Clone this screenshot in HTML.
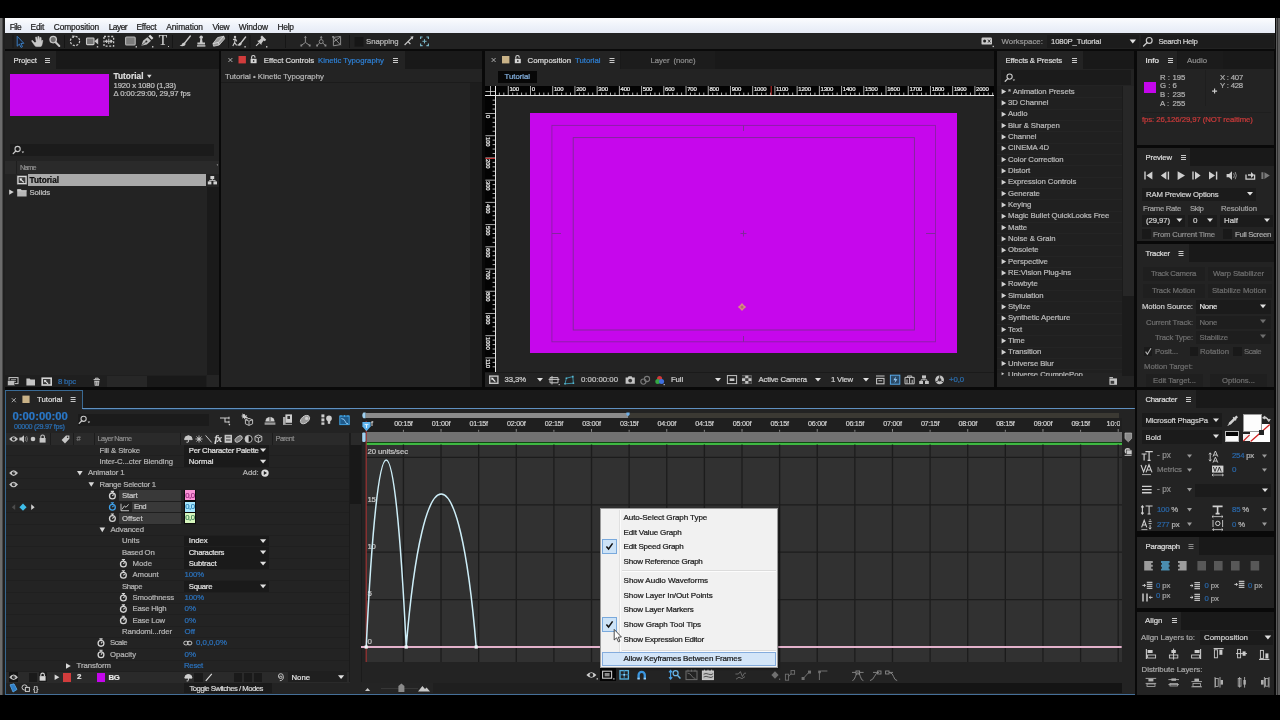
<!DOCTYPE html><html><head><meta charset="utf-8"><title>After Effects - Tutorial</title><style>
*{margin:0;padding:0;box-sizing:border-box}
html,body{width:1280px;height:720px;overflow:hidden;background:#000}
body{font-family:"Liberation Sans",sans-serif;font-size:10px;position:relative}
#app{position:absolute;left:0;top:0;width:1280px;height:720px;overflow:hidden;will-change:transform}
#app div,#app svg,#app span.a{position:absolute}
.t{white-space:nowrap;line-height:12px;height:12px;-webkit-text-stroke:0.22px currentColor}
.b{font-weight:bold}
</style></head><body><div id="app">
<div style="left:0px;top:18px;width:1280px;height:677px;background:#090909;"></div>
<div style="left:0px;top:18px;width:2px;height:677px;background:#6c6c6c;"></div>
<div style="left:2px;top:18px;width:1.4px;height:677px;background:#474747;"></div>
<div style="left:3.4px;top:18px;width:1.2px;height:677px;background:#1f1f1f;"></div>
<div style="left:1275.5px;top:18px;width:4.5px;height:677px;background:#5a5a5a;"></div>
<div style="left:1277px;top:18px;width:1px;height:677px;background:#303030;"></div>
<div style="left:4.6px;top:18.3px;width:1270.9px;height:14.4px;background:linear-gradient(#fbfcfe,#eef2fa 55%,#e6ebf5);"></div>
<div style="left:4.6px;top:33px;width:1270px;height:16.4px;background:#222222;"></div>
<div style="left:4.6px;top:49.4px;width:1270px;height:1.6px;background:#0a0a0a;"></div>
<div style="left:5px;top:51px;width:214px;height:336.3px;background:#232323;"></div>
<div style="left:5px;top:51px;width:214px;height:18px;background:#191919;"></div>
<div style="left:5px;top:51px;width:51px;height:19px;background:#232323;"></div>
<div style="left:221px;top:51px;width:261px;height:336.3px;background:#232323;"></div>
<div style="left:221px;top:51px;width:261px;height:18px;background:#191919;"></div>
<div style="left:221px;top:51px;width:184px;height:19px;background:#232323;"></div>
<div style="left:485px;top:51px;width:509px;height:336.3px;background:#232323;"></div>
<div style="left:485px;top:51px;width:509px;height:18px;background:#191919;"></div>
<div style="left:485px;top:51px;width:135px;height:19px;background:#232323;"></div>
<div style="left:997px;top:51px;width:137px;height:336.3px;background:#232323;"></div>
<div style="left:997px;top:51px;width:137px;height:18px;background:#191919;"></div>
<div style="left:997px;top:51px;width:86px;height:19px;background:#232323;"></div>
<div style="left:1137px;top:51px;width:137px;height:94px;background:#232323;"></div>
<div style="left:1137px;top:51px;width:137px;height:18px;background:#191919;"></div>
<div style="left:1137px;top:51px;width:40px;height:19px;background:#232323;"></div>
<div style="left:1137px;top:148px;width:137px;height:93px;background:#232323;"></div>
<div style="left:1137px;top:148px;width:137px;height:18px;background:#191919;"></div>
<div style="left:1137px;top:148px;width:53px;height:19px;background:#232323;"></div>
<div style="left:1137px;top:244px;width:137px;height:143px;background:#232323;"></div>
<div style="left:1137px;top:244px;width:137px;height:18px;background:#191919;"></div>
<div style="left:1137px;top:244px;width:52px;height:19px;background:#232323;"></div>
<div style="left:1137px;top:390px;width:137px;height:141px;background:#232323;"></div>
<div style="left:1137px;top:390px;width:137px;height:18px;background:#191919;"></div>
<div style="left:1137px;top:390px;width:59px;height:19px;background:#232323;"></div>
<div style="left:1137px;top:537px;width:137px;height:71px;background:#232323;"></div>
<div style="left:1137px;top:537px;width:137px;height:18px;background:#191919;"></div>
<div style="left:1137px;top:537px;width:62px;height:19px;background:#232323;"></div>
<div style="left:1137px;top:612px;width:137px;height:83px;background:#232323;"></div>
<div style="left:1137px;top:612px;width:137px;height:18px;background:#191919;"></div>
<div style="left:1137px;top:612px;width:44px;height:19px;background:#232323;"></div>
<div style="left:5px;top:390.2px;width:1129.8px;height:304.8px;background:#232323;"></div>
<div style="left:83px;top:390.2px;width:1051.8px;height:18.3px;background:#191919;"></div>
<div style="left:1047px;top:35px;width:92px;height:13px;background:#1c1c1c;"></div>
<div style="left:1141px;top:35px;width:133px;height:13px;background:#1c1c1c;"></div>
<div class="t" style="left:9.75px;top:20.69px;color:#1c1c1c;font-size:8.4px;letter-spacing:-0.509px;">File</div>
<div class="t" style="left:30.60px;top:20.69px;color:#1c1c1c;font-size:8.4px;letter-spacing:-0.269px;">Edit</div>
<div class="t" style="left:53.75px;top:20.69px;color:#1c1c1c;font-size:8.4px;letter-spacing:-0.122px;">Composition</div>
<div class="t" style="left:108.75px;top:20.69px;color:#1c1c1c;font-size:8.4px;letter-spacing:-0.533px;">Layer</div>
<div class="t" style="left:136.50px;top:20.69px;color:#1c1c1c;font-size:8.4px;letter-spacing:-0.221px;">Effect</div>
<div class="t" style="left:166.25px;top:20.69px;color:#1c1c1c;font-size:8.4px;letter-spacing:-0.067px;">Animation</div>
<div class="t" style="left:212.50px;top:20.69px;color:#1c1c1c;font-size:8.4px;letter-spacing:-0.327px;">View</div>
<div class="t" style="left:238.75px;top:20.69px;color:#1c1c1c;font-size:8.4px;letter-spacing:-0.104px;">Window</div>
<div class="t" style="left:277.50px;top:20.69px;color:#1c1c1c;font-size:8.4px;letter-spacing:-0.257px;">Help</div>
<div class="t" style="left:366.00px;top:35.81px;color:#b9b9b9;font-size:7.76px;letter-spacing:-0.037px;">Snapping</div>
<div class="t" style="left:1001.50px;top:35.77px;color:#9a9a9a;font-size:7.89px;">Workspace:</div>
<div class="t" style="left:1051.00px;top:35.81px;color:#d0d0d0;font-size:7.76px;letter-spacing:-0.167px;">1080P_Tutorial</div>
<div class="t" style="left:1158.50px;top:35.81px;color:#d0d0d0;font-size:7.76px;letter-spacing:-0.337px;">Search Help</div>
<svg style="left:0;top:0" width="1280" height="720" viewBox="0 0 1280 720" fill="none"><path d="M13,35V48" stroke="#161616" stroke-width="1"/><path d="M64.5,35V48" stroke="#161616" stroke-width="1"/><path d="M172.5,35V48" stroke="#161616" stroke-width="1"/><path d="M228.5,35V48" stroke="#161616" stroke-width="1"/><path d="M250,35V48" stroke="#161616" stroke-width="1"/><path d="M285.5,35V48" stroke="#161616" stroke-width="1"/><path d="M349.5,35V48" stroke="#161616" stroke-width="1"/><path d="M17.2,36.3V46.2L19.4,44.1L21,47.4L22.5,46.7L20.9,43.5L23.8,43.3Z" fill="#16202c" stroke="#3a7cc0" stroke-width="1" stroke-linejoin="round"/><path d="M33.6,41.5L32.2,40.2L31.6,40.9L34.6,45.3Q35.3,46.6 36.5,46.6H40Q41.6,46.6 41.9,45L42.8,40.6L41.9,40.2L41.2,42.2L41.1,37.6L40.1,37.4L39.7,41L39,36.5L37.9,36.4L37.8,41L36.6,37L35.6,37.2L36.2,41.8L35,43Z" fill="#c9c9c9" stroke="#c9c9c9" stroke-width="0.6" stroke-linejoin="round"/><circle cx="53.2" cy="39.6" r="3.2" stroke="#c9c9c9" stroke-width="1.3" fill="#6d6d6d"/><path d="M55.6,42.2L59.3,46" stroke="#c9c9c9" stroke-width="2" stroke-linecap="round"/><circle cx="75" cy="41" r="4.6" stroke="#c9c9c9" stroke-width="1.2" stroke-dasharray="2.2 1.4"/><path d="M72,35.6l3,0.2l-1.6,2.4z" fill="#c9c9c9"/><rect x="86.5" y="38" width="7.5" height="6.6" rx="0.8" fill="#777" stroke="#c9c9c9" stroke-width="1.1"/><path d="M94.3,41.2L98.2,38V44.6Z" fill="#c9c9c9"/><rect x="96.8" y="46.1" width="1.4" height="1.4" fill="#c9c9c9"/><rect x="104" y="36.5" width="9.6" height="9.6" stroke="#c9c9c9" stroke-width="1.3" stroke-dasharray="2 1.6"/><path d="M105.5,41.3H112M108.8,38.6V44M105.2,41.3l1.6,-1.4v2.8zM112.4,41.3l-1.6,-1.4v2.8z" stroke="#c9c9c9" stroke-width="1" fill="#c9c9c9"/><rect x="125.6" y="37" width="9.6" height="8" rx="1" fill="#7c7c7c" stroke="#b5b5b5" stroke-width="1.1"/><rect x="135.6" y="46.1" width="1.4" height="1.4" fill="#c9c9c9"/><path d="M141.4,45.7L143,40.8L147.4,37.2L151,40.8L146.8,44.6Z" fill="#c2c2c2"/><circle cx="146.4" cy="41.4" r="1" fill="#2a2a2a"/><path d="M141.8,45.3L145.8,42" stroke="#2a2a2a" stroke-width="0.7"/><path d="M148.4,36.2L150.2,34.8L153.4,38L151.8,39.8Z" fill="#dadada"/><rect x="152" y="46.1" width="1.4" height="1.4" fill="#c9c9c9"/><path d="M190.3,36L184.2,43.6" stroke="#c9c9c9" stroke-width="1.5" stroke-linecap="round"/><path d="M184.8,42.6Q186.4,44.6 184.4,45.8Q182,46.8 179.6,45.6Q182.2,45 182.6,43Z" fill="#c9c9c9"/><circle cx="201.2" cy="37.2" r="1.7" fill="#c9c9c9"/><path d="M200.4,38.4H202L202.6,42.4H205V44.4H197.4V42.4H199.8Z" fill="#c9c9c9"/><rect x="197" y="45.2" width="8.4" height="1.4" fill="#c9c9c9"/><path d="M217.6,37.6L223.8,36.2L224.6,38.8L219.2,45L213.6,46.2L213,43.6Z" fill="#9a9a9a" stroke="#c9c9c9" stroke-width="0.9" stroke-linejoin="round"/><path d="M213,43.6L218.4,42.4L219.2,45M218.4,42.4L223.8,36.2" stroke="#e4e4e4" stroke-width="0.8"/><circle cx="235" cy="37" r="1.2" fill="#c9c9c9"/><path d="M233,39.6L235.4,39L236.8,41.4M235.2,39.2L234.6,42.6L232.8,46M234.8,42.8L236.6,45.4" stroke="#c9c9c9" stroke-width="1.1"/><path d="M245.6,37L240.6,43.4" stroke="#c9c9c9" stroke-width="1.4" stroke-linecap="round"/><path d="M241,42.6Q242.6,44.4 240.4,45.4Q238.4,46 236.8,45Q239,44.6 239.2,43Z" fill="#c9c9c9"/><rect x="244.4" y="46.1" width="1.4" height="1.4" fill="#c9c9c9"/><path d="M260.4,37L262,35.6L266.2,39.8L264.8,41.2L263.6,40.6L261.6,43.2L261.4,45L257.2,40.8L259,40.4L261.2,38.2Z" fill="#c9c9c9"/><path d="M259.2,42.8L256,45.8" stroke="#c9c9c9" stroke-width="1.1"/><rect x="266" y="46.1" width="1.4" height="1.4" fill="#c9c9c9"/><path d="M305.4,37V42.4L301.4,45.4M305.4,42.4L309.6,45.4" stroke="#8c8c8c" stroke-width="1"/><path d="M305.4,35.8l1.4,2h-2.8zM300.4,44.6h1.8v1.8h-1.8zM308.8,44.6h1.8v1.8h-1.8z" fill="#8c8c8c"/><circle cx="321.2" cy="41.6" r="2" stroke="#8c8c8c" stroke-width="1"/><path d="M321.2,37V39.4M319.6,43L317.4,45.2M322.8,43L325,45.2" stroke="#8c8c8c" stroke-width="1"/><path d="M321.2,35.8l1.4,2h-2.8zM316.2,44.6h1.8v1.8h-1.8zM324.6,44.6h1.8v1.8h-1.8z" fill="#8c8c8c"/><path d="M333.4,37.4L340.6,36.4V44.6L333.4,45.8ZM333,36.6L340.8,45.2M340.4,37L333.4,42" stroke="#8c8c8c" stroke-width="1"/><rect x="332.2" y="36" width="1.8" height="1.8" fill="#8c8c8c"/><rect x="354.5" y="37" width="9" height="9.6" fill="#161616"/><path d="M404.6,45L408,41.6L410.4,44M408,41.6L412.6,37" stroke="#c9c9c9" stroke-width="1.2"/><path d="M413.4,36.2l-3.2,0.6l2.6,2.6z" fill="#c9c9c9"/><path d="M420.6,39V37H422.6M426.4,37H428.4V39M428.4,43.6V45.6H426.4M422.6,45.6H420.6V43.6" stroke="#79b4c4" stroke-width="1.2"/><path d="M424.5,39.2V43.4M422.4,41.3H426.6" stroke="#79b4c4" stroke-width="1"/><rect x="981.5" y="37.6" width="10.5" height="7" rx="1.2" fill="#c9c9c9"/><circle cx="984.6" cy="41.1" r="1.5" fill="#222"/><path d="M988,39.6L990.4,42.6M990.4,39.6L988,42.6" stroke="#222" stroke-width="0.9"/><rect x="992.6" y="45.8" width="1.3" height="1.3" fill="#c9c9c9"/><path d="M1129.6,39.6H1136L1132.8,43.4Z" fill="#e2e2e2"/><circle cx="1149.2" cy="40.4" r="2.9" stroke="#c9c9c9" stroke-width="1.2"/><path d="M1147.2,42.6L1143.6,46" stroke="#c9c9c9" stroke-width="1.4" stroke-linecap="round"/></svg>
<div class="t" style="left:158.80px;top:34.99px;color:#d4d4d4;font-size:13.6px;font-family:'Liberation Serif',serif;">T</div>
<div style="left:167.6px;top:46.1px;width:1.4px;height:1.4px;background:#c9c9c9"></div>
<div class="t" style="left:13.40px;top:54.91px;color:#dcdcdc;font-size:7.76px;letter-spacing:-0.107px;">Project</div>
<div style="left:10px;top:74px;width:99px;height:42px;background:#c406ec;"></div>
<div class="t" style="left:113.50px;top:71.14px;color:#dedede;font-size:8.24px;letter-spacing:0.050px;font-weight:bold;">Tutorial</div>
<div class="t" style="left:113.50px;top:79.61px;color:#c0c0c0;font-size:7.76px;letter-spacing:-0.147px;">1920 x 1080 (1,33)</div>
<div class="t" style="left:113.50px;top:88.31px;color:#c0c0c0;font-size:7.76px;letter-spacing:-0.123px;">Δ 0:00:29:00, 29,97 fps</div>
<div style="left:10px;top:144px;width:204px;height:12px;background:#1b1b1b;"></div>
<div style="left:5px;top:161px;width:214px;height:12.5px;background:#2a2a2a;"></div>
<div style="left:16px;top:161px;width:1px;height:12.5px;background:#1e1e1e;"></div>
<div class="t" style="left:20.00px;top:161.68px;color:#8f8f8f;font-size:7.27px;letter-spacing:-0.973px;">Name</div>
<div style="left:28px;top:174px;width:178px;height:12.3px;background:#a9a9a9;"></div>
<div class="t" style="left:29.50px;top:174.76px;color:#0d0d0d;font-size:8.21px;font-weight:bold;">Tutorial</div>
<div class="t" style="left:29.50px;top:187.31px;color:#c0c0c0;font-size:7.76px;letter-spacing:-0.106px;">Solids</div>
<div style="left:207px;top:186.5px;width:12px;height:188.5px;background:#1a1a1a;"></div>
<div style="left:5px;top:375px;width:214px;height:12.3px;background:#1f1f1f;"></div>
<div style="left:107px;top:376px;width:40px;height:11px;background:#272727;"></div>
<div style="left:147px;top:376px;width:59px;height:11px;background:#191919;"></div>
<div style="left:207px;top:375px;width:12px;height:12.3px;background:#242424;"></div>
<div class="t" style="left:58.00px;top:376.11px;color:#2b6cae;font-size:7.76px;letter-spacing:-0.197px;">8 bpc</div>
<svg style="left:0;top:0" width="1280" height="720" viewBox="0 0 1280 720" fill="none"><path d="M45,58.5h5M45,60.5h5M45,62.5h5" stroke="#c9c9c9" stroke-width="1"/><path d="M147,74.8h4.6l-2.3,3.2z" fill="#dcdcdc"/><circle cx="17.6" cy="149" r="2.6" stroke="#c9c9c9" stroke-width="1.1"/><path d="M15.8,151L13.2,153.6" stroke="#c9c9c9" stroke-width="1.3" stroke-linecap="round"/><path d="M21.6,151.6h2.6l-1.3,1.6z" fill="#c9c9c9"/><path d="M216.6,164.6h1.6l-0.8,1.2z" fill="#bdbdbd"/><rect x="17" y="175.6" width="10" height="9" fill="#d8d8d8" stroke="#444" stroke-width="0.6"/><rect x="18.6" y="177.2" width="6.8" height="5.8" fill="#3a3a3a"/><path d="M19.6,178.2l2.8,0.4l-0.8,0.8l2.6,2.6l-0.8,0.8l-2.6,-2.6l-0.8,0.8z" fill="#e8e8e8"/><rect x="210.4" y="176" width="3.8" height="3" fill="#d0d0d0"/><rect x="207.8" y="181.4" width="3.6" height="3" fill="#d0d0d0"/><rect x="213.4" y="181.4" width="3.6" height="3" fill="#d0d0d0"/><path d="M212.3,179v1.4M209.6,181.4v-1h5.6v1" stroke="#d0d0d0" stroke-width="0.9"/><path d="M9.2,189.4v5.4l4.6,-2.7z" fill="#d0d0d0"/><path d="M17.2,189h3.6l1,1.2h4.8v6.2h-9.4z" fill="#b8b8b8"/><path d="M17.2,190.8h9.4" stroke="#dadada" stroke-width="0.7"/><rect x="9" y="377.6" width="9" height="6" fill="none" stroke="#c9c9c9" stroke-width="1"/><rect x="7.6" y="380.6" width="7" height="5" fill="#bbb" stroke="#222" stroke-width="0.5"/><path d="M11,379.6h5M11,381.4h5" stroke="#c9c9c9" stroke-width="0.7"/><path d="M26.4,378.4h3.2l0.9,1.1h4.5v6h-8.6z" fill="#c4c4c4"/><rect x="41.4" y="377.4" width="10.6" height="8.4" fill="#d4d4d4"/><rect x="43" y="379" width="7.4" height="5.2" fill="#3a3a3a"/><path d="M44,380l2.6,0.3l-0.7,0.7l2.6,2.4l-0.8,0.8l-2.5,-2.5l-0.8,0.7z" fill="#e8e8e8"/><path d="M93.6,379.6h6.4M95.4,379.4v-1.2h2.8v1.2" stroke="#c4c4c4" stroke-width="1"/><path d="M94.2,380.8h5.2l-0.5,5h-4.2z" fill="#c4c4c4"/><path d="M95.8,381.8v3M97.8,381.8v3" stroke="#333" stroke-width="0.6"/></svg>
<div class="t" style="left:263.75px;top:54.71px;color:#dadada;font-size:7.76px;letter-spacing:-0.017px;">Effect Controls</div>
<div class="t" style="left:318.00px;top:54.70px;color:#2e7fd2;font-size:7.78px;">Kinetic Typography</div>
<div class="t" style="left:225.00px;top:70.70px;color:#b4b4b4;font-size:7.8px;">Tutorial • Kinetic Typography</div>
<div style="left:221px;top:82px;width:261px;height:1px;background:#1b1b1b;"></div>
<div style="left:470px;top:83px;width:12px;height:304.3px;background:#1d1d1d;"></div>
<div style="left:621px;top:51px;width:94px;height:18px;background:#1c1c1c;"></div>
<div class="t" style="left:527.50px;top:54.69px;color:#dadada;font-size:7.83px;">Composition</div>
<div class="t" style="left:575.00px;top:54.71px;color:#2e7fd2;font-size:7.76px;letter-spacing:-0.011px;">Tutorial</div>
<div class="t" style="left:650.50px;top:54.71px;color:#8b8b8b;font-size:7.76px;letter-spacing:-0.089px;white-space:pre;">Layer  (none)</div>
<div style="left:497.5px;top:70.5px;width:39.5px;height:12px;background:#070707;"></div>
<div class="t" style="left:504.50px;top:70.91px;color:#86b4e4;font-size:7.76px;letter-spacing:-0.011px;">Tutorial</div>
<div style="left:485px;top:85.5px;width:509px;height:10.5px;background:#030303;"></div>
<div style="left:485px;top:96px;width:10.8px;height:276px;background:#030303;"></div>
<div style="left:485px;top:95px;width:509px;height:1px;background:#e8e8e8;"></div>
<div style="left:494.8px;top:85.5px;width:1px;height:286.5px;background:#e8e8e8;"></div>
<div class="t" style="left:509.48px;top:83.32px;color:#ececec;font-size:6px;letter-spacing:-0.2px;">100</div>
<div class="t" style="left:531.70px;top:83.32px;color:#ececec;font-size:6px;letter-spacing:-0.2px;">0</div>
<div class="t" style="left:553.92px;top:83.32px;color:#ececec;font-size:6px;letter-spacing:-0.2px;">100</div>
<div class="t" style="left:576.14px;top:83.32px;color:#ececec;font-size:6px;letter-spacing:-0.2px;">200</div>
<div class="t" style="left:598.36px;top:83.32px;color:#ececec;font-size:6px;letter-spacing:-0.2px;">300</div>
<div class="t" style="left:620.58px;top:83.32px;color:#ececec;font-size:6px;letter-spacing:-0.2px;">400</div>
<div class="t" style="left:642.80px;top:83.32px;color:#ececec;font-size:6px;letter-spacing:-0.2px;">500</div>
<div class="t" style="left:665.02px;top:83.32px;color:#ececec;font-size:6px;letter-spacing:-0.2px;">600</div>
<div class="t" style="left:687.24px;top:83.32px;color:#ececec;font-size:6px;letter-spacing:-0.2px;">700</div>
<div class="t" style="left:709.46px;top:83.32px;color:#ececec;font-size:6px;letter-spacing:-0.2px;">800</div>
<div class="t" style="left:731.68px;top:83.32px;color:#ececec;font-size:6px;letter-spacing:-0.2px;">900</div>
<div class="t" style="left:753.90px;top:83.32px;color:#ececec;font-size:6px;letter-spacing:-0.2px;">1000</div>
<div class="t" style="left:776.12px;top:83.32px;color:#ececec;font-size:6px;letter-spacing:-0.2px;">1100</div>
<div class="t" style="left:798.34px;top:83.32px;color:#ececec;font-size:6px;letter-spacing:-0.2px;">1200</div>
<div class="t" style="left:820.56px;top:83.32px;color:#ececec;font-size:6px;letter-spacing:-0.2px;">1300</div>
<div class="t" style="left:842.78px;top:83.32px;color:#ececec;font-size:6px;letter-spacing:-0.2px;">1400</div>
<div class="t" style="left:865.00px;top:83.32px;color:#ececec;font-size:6px;letter-spacing:-0.2px;">1500</div>
<div class="t" style="left:887.22px;top:83.32px;color:#ececec;font-size:6px;letter-spacing:-0.2px;">1600</div>
<div class="t" style="left:909.44px;top:83.32px;color:#ececec;font-size:6px;letter-spacing:-0.2px;">1700</div>
<div class="t" style="left:931.66px;top:83.32px;color:#ececec;font-size:6px;letter-spacing:-0.2px;">1800</div>
<div class="t" style="left:953.88px;top:83.32px;color:#ececec;font-size:6px;letter-spacing:-0.2px;">1900</div>
<div class="t" style="left:976.10px;top:83.32px;color:#ececec;font-size:6px;letter-spacing:-0.2px;">2000</div>
<div class="t" style="left:490.8px;top:114.70px;color:#ececec;font-size:6px;line-height:7px;height:7px;letter-spacing:-0.2px;transform-origin:0 0;transform:rotate(90deg)">0</div>
<div class="t" style="left:490.8px;top:136.92px;color:#ececec;font-size:6px;line-height:7px;height:7px;letter-spacing:-0.2px;transform-origin:0 0;transform:rotate(90deg)">100</div>
<div class="t" style="left:490.8px;top:159.14px;color:#ececec;font-size:6px;line-height:7px;height:7px;letter-spacing:-0.2px;transform-origin:0 0;transform:rotate(90deg)">200</div>
<div class="t" style="left:490.8px;top:181.36px;color:#ececec;font-size:6px;line-height:7px;height:7px;letter-spacing:-0.2px;transform-origin:0 0;transform:rotate(90deg)">300</div>
<div class="t" style="left:490.8px;top:203.58px;color:#ececec;font-size:6px;line-height:7px;height:7px;letter-spacing:-0.2px;transform-origin:0 0;transform:rotate(90deg)">400</div>
<div class="t" style="left:490.8px;top:225.80px;color:#ececec;font-size:6px;line-height:7px;height:7px;letter-spacing:-0.2px;transform-origin:0 0;transform:rotate(90deg)">500</div>
<div class="t" style="left:490.8px;top:248.02px;color:#ececec;font-size:6px;line-height:7px;height:7px;letter-spacing:-0.2px;transform-origin:0 0;transform:rotate(90deg)">600</div>
<div class="t" style="left:490.8px;top:270.24px;color:#ececec;font-size:6px;line-height:7px;height:7px;letter-spacing:-0.2px;transform-origin:0 0;transform:rotate(90deg)">700</div>
<div class="t" style="left:490.8px;top:292.46px;color:#ececec;font-size:6px;line-height:7px;height:7px;letter-spacing:-0.2px;transform-origin:0 0;transform:rotate(90deg)">800</div>
<div class="t" style="left:490.8px;top:314.68px;color:#ececec;font-size:6px;line-height:7px;height:7px;letter-spacing:-0.2px;transform-origin:0 0;transform:rotate(90deg)">900</div>
<div class="t" style="left:490.8px;top:336.90px;color:#ececec;font-size:6px;line-height:7px;height:7px;letter-spacing:-0.2px;transform-origin:0 0;transform:rotate(90deg)">1000</div>
<div class="t" style="left:490.8px;top:359.12px;color:#ececec;font-size:6px;line-height:7px;height:7px;letter-spacing:-0.2px;transform-origin:0 0;transform:rotate(90deg)">110</div>
<div style="left:530px;top:113px;width:427px;height:240px;background:#c607ec;"></div>
<div style="left:485px;top:372px;width:509px;height:15.3px;background:#232323;"></div>
<div style="left:485px;top:371.5px;width:509px;height:1px;background:#1a1a1a;"></div>
<div class="t" style="left:504.50px;top:374.21px;color:#d0d0d0;font-size:7.76px;letter-spacing:-0.101px;">33,3%</div>
<div class="t" style="left:581.00px;top:374.19px;color:#c4c4c4;font-size:7.83px;">0:00:00:00</div>
<div class="t" style="left:671.00px;top:374.21px;color:#d0d0d0;font-size:7.76px;letter-spacing:-0.126px;">Full</div>
<div class="t" style="left:758.50px;top:374.21px;color:#d0d0d0;font-size:7.76px;letter-spacing:-0.184px;">Active Camera</div>
<div class="t" style="left:831.00px;top:374.21px;color:#d0d0d0;font-size:7.76px;letter-spacing:-0.192px;">1 View</div>
<div class="t" style="left:949.00px;top:374.21px;color:#2b6fb0;font-size:7.76px;letter-spacing:-0.080px;">+0,0</div>
<svg style="left:0;top:0" width="1280" height="720" viewBox="0 0 1280 720" fill="none"><path d="M228.4,58l4,4M232.4,58l-4,4" stroke="#b8b8b8" stroke-width="0.9"/><rect x="238.5" y="56" width="7.4" height="7.4" fill="#d13c3c"/><rect x="250.6" y="58.800000000000004" width="6" height="4.4" fill="#d6d6d6"/><path d="M251.6,58.800000000000004v-1.6a1.7,1.7 0 0 1 3.4,0v0.6" stroke="#d6d6d6" stroke-width="1.1"/><rect x="252.9" y="60.2" width="1.4" height="1.6" fill="#222"/><path d="M393,58.5h5M393,60.5h5M393,62.5h5" stroke="#c9c9c9" stroke-width="1"/><path d="M491.6,58l4,4M495.6,58l-4,4" stroke="#b8b8b8" stroke-width="0.9"/><rect x="502" y="56" width="7.4" height="7.4" fill="#c9b287"/><rect x="514.8" y="58.800000000000004" width="6" height="4.4" fill="#d6d6d6"/><path d="M515.8,58.800000000000004v-1.6a1.7,1.7 0 0 1 3.4,0v0.6" stroke="#d6d6d6" stroke-width="1.1"/><rect x="517.0999999999999" y="60.2" width="1.4" height="1.6" fill="#222"/><path d="M609.5,58.5h5M609.5,60.5h5M609.5,62.5h5" stroke="#c9c9c9" stroke-width="1"/><path d="M499.39,92.6V95M503.84,92.6V95M508.28,86V95M512.72,92.6V95M517.17,92.6V95M521.61,92.6V95M526.06,92.6V95M530.50,86V95M534.94,92.6V95M539.39,92.6V95M543.83,92.6V95M548.28,92.6V95M552.72,86V95M557.16,92.6V95M561.61,92.6V95M566.05,92.6V95M570.50,92.6V95M574.94,86V95M579.38,92.6V95M583.83,92.6V95M588.27,92.6V95M592.72,92.6V95M597.16,86V95M601.60,92.6V95M606.05,92.6V95M610.49,92.6V95M614.94,92.6V95M619.38,86V95M623.82,92.6V95M628.27,92.6V95M632.71,92.6V95M637.16,92.6V95M641.60,86V95M646.04,92.6V95M650.49,92.6V95M654.93,92.6V95M659.38,92.6V95M663.82,86V95M668.26,92.6V95M672.71,92.6V95M677.15,92.6V95M681.60,92.6V95M686.04,86V95M690.48,92.6V95M694.93,92.6V95M699.37,92.6V95M703.82,92.6V95M708.26,86V95M712.70,92.6V95M717.15,92.6V95M721.59,92.6V95M726.04,92.6V95M730.48,86V95M734.92,92.6V95M739.37,92.6V95M743.81,92.6V95M748.26,92.6V95M752.70,86V95M757.14,92.6V95M761.59,92.6V95M766.03,92.6V95M770.48,92.6V95M774.92,86V95M779.36,92.6V95M783.81,92.6V95M788.25,92.6V95M792.70,92.6V95M797.14,86V95M801.58,92.6V95M806.03,92.6V95M810.47,92.6V95M814.92,92.6V95M819.36,86V95M823.80,92.6V95M828.25,92.6V95M832.69,92.6V95M837.14,92.6V95M841.58,86V95M846.02,92.6V95M850.47,92.6V95M854.91,92.6V95M859.36,92.6V95M863.80,86V95M868.24,92.6V95M872.69,92.6V95M877.13,92.6V95M881.58,92.6V95M886.02,86V95M890.46,92.6V95M894.91,92.6V95M899.35,92.6V95M903.80,92.6V95M908.24,86V95M912.68,92.6V95M917.13,92.6V95M921.57,92.6V95M926.02,92.6V95M930.46,86V95M934.90,92.6V95M939.35,92.6V95M943.79,92.6V95M948.24,92.6V95M952.68,86V95M957.12,92.6V95M961.57,92.6V95M966.01,92.6V95M970.46,92.6V95M974.90,86V95M979.34,92.6V95M983.79,92.6V95M988.23,92.6V95M992.68,92.6V95M492.6,100.17H495M492.6,104.61H495M492.6,109.06H495M485.4,113.50H495M492.6,117.94H495M492.6,122.39H495M492.6,126.83H495M492.6,131.28H495M485.4,135.72H495M492.6,140.16H495M492.6,144.61H495M492.6,149.05H495M492.6,153.50H495M485.4,157.94H495M492.6,162.38H495M492.6,166.83H495M492.6,171.27H495M492.6,175.72H495M485.4,180.16H495M492.6,184.60H495M492.6,189.05H495M492.6,193.49H495M492.6,197.94H495M485.4,202.38H495M492.6,206.82H495M492.6,211.27H495M492.6,215.71H495M492.6,220.16H495M485.4,224.60H495M492.6,229.04H495M492.6,233.49H495M492.6,237.93H495M492.6,242.38H495M485.4,246.82H495M492.6,251.26H495M492.6,255.71H495M492.6,260.15H495M492.6,264.60H495M485.4,269.04H495M492.6,273.48H495M492.6,277.93H495M492.6,282.37H495M492.6,286.82H495M485.4,291.26H495M492.6,295.70H495M492.6,300.15H495M492.6,304.59H495M492.6,309.04H495M485.4,313.48H495M492.6,317.92H495M492.6,322.37H495M492.6,326.81H495M492.6,331.26H495M485.4,335.70H495M492.6,340.14H495M492.6,344.59H495M492.6,349.03H495M492.6,353.48H495M485.4,357.92H495M492.6,362.36H495M492.6,366.81H495M490.5,86V95M485.4,91.5H495" stroke="#d8d8d8" stroke-width="0.8"/><path d="M771.2,86V95M485.4,158.4H495" stroke="#d03030" stroke-width="1"/><rect x="551.9" y="125.4" width="383.6" height="216.4" stroke="#8a1fa5" stroke-width="0.9"/><rect x="573.2" y="137.6" width="341.2" height="192.4" stroke="#7d2a95" stroke-width="0.9"/><path d="M743.5,230.5V236.5M740.5,233.5H746.5M743.5,125.4V131M743.5,336V341.8M552,233.5H561M926,233.5H935.4" stroke="#7d2a95" stroke-width="0.9"/><path d="M742,303l2,2.2l2.2,1.8l-2.2,1.8l-2,2.2l-2,-2.2l-2.2,-1.8l2.2,-1.8z" fill="#d98a82"/><circle cx="742" cy="307" r="1.5" fill="#b5657a"/><path d="M537,378h6l-3.0,3.5999999999999996z" fill="#e0e0e0"/><path d="M715,378h6l-3.0,3.5999999999999996z" fill="#e0e0e0"/><path d="M815,378h6l-3.0,3.5999999999999996z" fill="#e0e0e0"/><path d="M863,378h6l-3.0,3.5999999999999996z" fill="#e0e0e0"/><rect x="489" y="375.4" width="9.6" height="8.6" fill="#c4c4c4"/><rect x="490.4" y="376.8" width="6.8" height="5.8" fill="#333"/><path d="M491.2,377.6l2.6,0.3l-0.7,0.7l2.6,2.6l-0.8,0.8l-2.6,-2.6l-0.7,0.7z" fill="#eee"/><path d="M550,377.6h8v5.2h-8zM552,376v8.4M548.6,379.4h10.8" stroke="#c4c4c4" stroke-width="1"/><rect x="558.6" y="384" width="1.2" height="1.2" fill="#c4c4c4"/><path d="M566.4,378.2l6.4,-1.6l0.6,6.6l-8.4,0.6z" stroke="#3f9db8" stroke-width="0.9"/><path d="M565.6,377.4h1.6v1.6h-1.6zM572,375.8h1.6v1.6h-1.6zM572.6,382.4h1.6v1.6h-1.6zM564.2,383h1.6v1.6h-1.6z" fill="#58b8d0"/><path d="M625.6,377.4h2.2l0.8,-1.2h3l0.8,1.2h2.4v6.4h-9.2z" fill="#c4c4c4"/><circle cx="630.2" cy="380.6" r="1.9" fill="#333"/><circle cx="643.4" cy="381.6" r="2.6" stroke="#7a7a7a" stroke-width="1.1"/><circle cx="647" cy="379" r="2.6" stroke="#7a7a7a" stroke-width="1.1"/><circle cx="659.6" cy="378.4" r="2.5" fill="#d03a3a"/><circle cx="657.8" cy="381.4" r="2.5" fill="#35a845"/><circle cx="661.6" cy="381.4" r="2.5" fill="#3f6fe0"/><rect x="663.6" y="384" width="1.2" height="1.2" fill="#c4c4c4"/><rect x="727.4" y="375.6" width="9.2" height="8" stroke="#c4c4c4" stroke-width="1"/><rect x="729.6" y="378.4" width="4.8" height="2.6" fill="#c4c4c4"/><rect x="742" y="375.4" width="9.6" height="8.4" fill="#c4c4c4"/><path d="M742,375.4h3.2v2.8h-3.2zM748.4,375.4h3.2v2.8h-3.2zM745.2,378.2h3.2v2.8h-3.2zM742,381h3.2v2.8h-3.2zM748.4,381h3.2v2.8h-3.2z" fill="#3a3a3a"/><rect x="876.6" y="378.4" width="7.4" height="5.4" stroke="#c4c4c4" stroke-width="1.1"/><path d="M876,376h8.6M878.4,380.8h3.8" stroke="#c4c4c4" stroke-width="1.1"/><rect x="890.4" y="375.2" width="9.4" height="9" fill="#2a4a66" stroke="#58a8e8" stroke-width="1"/><path d="M895.8,376.6l-2.4,3.6h2l-1,3l3,-4h-2z" fill="#9ad0ff"/><path d="M905,377.4h9.2v6.4h-9.2zM907.4,377.4v-1.4h4.4v1.4" stroke="#c4c4c4" stroke-width="1"/><path d="M907,379.4v4M909.6,378v5.4M912.2,379.8v3.6" stroke="#c4c4c4" stroke-width="1"/><rect x="922" y="375.4" width="4" height="3" fill="#c4c4c4"/><rect x="919.2" y="381" width="3.8" height="3" fill="#c4c4c4"/><rect x="925" y="381" width="3.8" height="3" fill="#c4c4c4"/><path d="M924,378.4v1.4M921.1,381v-1.2h5.8v1.2" stroke="#c4c4c4" stroke-width="0.9"/><circle cx="939.6" cy="379.8" r="4.4" fill="#c4c4c4"/><circle cx="939.6" cy="379.8" r="1.7" fill="#333"/><path d="M939.6,375.4v2.6M935.8,382l2.2,-1.2M943.4,382l-2.2,-1.2" stroke="#333" stroke-width="0.9"/></svg>
<div class="t" style="left:1005.50px;top:54.71px;color:#dadada;font-size:7.76px;letter-spacing:-0.169px;">Effects &amp; Presets</div>
<div style="left:1001px;top:70px;width:130px;height:14.5px;background:#1b1b1b;"></div>
<div style="left:997px;top:85.5px;width:125px;height:287px;background:#202020;"></div>
<div style="left:1122px;top:85.5px;width:12px;height:290.5px;background:#1b1b1b;"></div>
<div style="left:1122.6px;top:86px;width:11px;height:210px;background:#272727;"></div>
<div style="left:997px;top:85.5px;width:125px;height:290.2px;overflow:hidden">
<div class="t" style="left:11.00px;top:0.31px;color:#b9b9b9;font-size:7.76px;letter-spacing:-0.055px;">* Animation Presets</div>
<div style="left:0;top:11.90px;width:125px;height:1px;background:#242424"></div>
<div class="t" style="left:11.00px;top:11.64px;color:#b9b9b9;font-size:7.76px;letter-spacing:-0.063px;">3D Channel</div>
<div style="left:0;top:23.23px;width:125px;height:1px;background:#242424"></div>
<div class="t" style="left:11.00px;top:22.97px;color:#b9b9b9;font-size:7.76px;letter-spacing:-0.061px;">Audio</div>
<div style="left:0;top:34.56px;width:125px;height:1px;background:#242424"></div>
<div class="t" style="left:11.00px;top:34.30px;color:#b9b9b9;font-size:7.76px;letter-spacing:-0.058px;">Blur &amp; Sharpen</div>
<div style="left:0;top:45.89px;width:125px;height:1px;background:#242424"></div>
<div class="t" style="left:11.00px;top:45.63px;color:#b9b9b9;font-size:7.76px;letter-spacing:-0.064px;">Channel</div>
<div style="left:0;top:57.22px;width:125px;height:1px;background:#242424"></div>
<div class="t" style="left:11.00px;top:56.96px;color:#b9b9b9;font-size:7.76px;letter-spacing:-0.072px;">CINEMA 4D</div>
<div style="left:0;top:68.55px;width:125px;height:1px;background:#242424"></div>
<div class="t" style="left:11.00px;top:68.29px;color:#b9b9b9;font-size:7.76px;letter-spacing:-0.055px;">Color Correction</div>
<div style="left:0;top:79.88px;width:125px;height:1px;background:#242424"></div>
<div class="t" style="left:11.00px;top:79.62px;color:#b9b9b9;font-size:7.76px;letter-spacing:-0.050px;">Distort</div>
<div style="left:0;top:91.21px;width:125px;height:1px;background:#242424"></div>
<div class="t" style="left:11.00px;top:90.95px;color:#b9b9b9;font-size:7.76px;letter-spacing:-0.057px;">Expression Controls</div>
<div style="left:0;top:102.54px;width:125px;height:1px;background:#242424"></div>
<div class="t" style="left:11.00px;top:102.28px;color:#b9b9b9;font-size:7.76px;letter-spacing:-0.063px;">Generate</div>
<div style="left:0;top:113.87px;width:125px;height:1px;background:#242424"></div>
<div class="t" style="left:11.00px;top:113.61px;color:#b9b9b9;font-size:7.76px;letter-spacing:-0.061px;">Keying</div>
<div style="left:0;top:125.20px;width:125px;height:1px;background:#242424"></div>
<div class="t" style="left:11.00px;top:124.94px;color:#b9b9b9;font-size:7.76px;letter-spacing:-0.057px;">Magic Bullet QuickLooks Free</div>
<div style="left:0;top:136.53px;width:125px;height:1px;background:#242424"></div>
<div class="t" style="left:11.00px;top:136.27px;color:#b9b9b9;font-size:7.76px;letter-spacing:-0.060px;">Matte</div>
<div style="left:0;top:147.86px;width:125px;height:1px;background:#242424"></div>
<div class="t" style="left:11.00px;top:147.60px;color:#b9b9b9;font-size:7.76px;letter-spacing:-0.057px;">Noise &amp; Grain</div>
<div style="left:0;top:159.19px;width:125px;height:1px;background:#242424"></div>
<div class="t" style="left:11.00px;top:158.93px;color:#b9b9b9;font-size:7.76px;letter-spacing:-0.060px;">Obsolete</div>
<div style="left:0;top:170.52px;width:125px;height:1px;background:#242424"></div>
<div class="t" style="left:11.00px;top:170.26px;color:#b9b9b9;font-size:7.76px;letter-spacing:-0.057px;">Perspective</div>
<div style="left:0;top:181.85px;width:125px;height:1px;background:#242424"></div>
<div class="t" style="left:11.00px;top:181.59px;color:#b9b9b9;font-size:7.76px;letter-spacing:-0.055px;">RE:Vision Plug-ins</div>
<div style="left:0;top:193.18px;width:125px;height:1px;background:#242424"></div>
<div class="t" style="left:11.00px;top:192.92px;color:#b9b9b9;font-size:7.76px;letter-spacing:-0.067px;">Rowbyte</div>
<div style="left:0;top:204.51px;width:125px;height:1px;background:#242424"></div>
<div class="t" style="left:11.00px;top:204.25px;color:#b9b9b9;font-size:7.76px;letter-spacing:-0.056px;">Simulation</div>
<div style="left:0;top:215.84px;width:125px;height:1px;background:#242424"></div>
<div class="t" style="left:11.00px;top:215.58px;color:#b9b9b9;font-size:7.76px;letter-spacing:-0.050px;">Stylize</div>
<div style="left:0;top:227.17px;width:125px;height:1px;background:#242424"></div>
<div class="t" style="left:11.00px;top:226.91px;color:#b9b9b9;font-size:7.76px;letter-spacing:-0.054px;">Synthetic Aperture</div>
<div style="left:0;top:238.50px;width:125px;height:1px;background:#242424"></div>
<div class="t" style="left:11.00px;top:238.24px;color:#b9b9b9;font-size:7.76px;letter-spacing:-0.055px;">Text</div>
<div style="left:0;top:249.83px;width:125px;height:1px;background:#242424"></div>
<div class="t" style="left:11.00px;top:249.57px;color:#b9b9b9;font-size:7.76px;letter-spacing:-0.066px;">Time</div>
<div style="left:0;top:261.16px;width:125px;height:1px;background:#242424"></div>
<div class="t" style="left:11.00px;top:260.90px;color:#b9b9b9;font-size:7.76px;letter-spacing:-0.052px;">Transition</div>
<div style="left:0;top:272.49px;width:125px;height:1px;background:#242424"></div>
<div class="t" style="left:11.00px;top:272.23px;color:#b9b9b9;font-size:7.76px;letter-spacing:-0.055px;">Universe Blur</div>
<div style="left:0;top:283.82px;width:125px;height:1px;background:#242424"></div>
<div class="t" style="left:11.00px;top:283.56px;color:#b9b9b9;font-size:7.76px;letter-spacing:-0.062px;">Universe CrumplePop</div>
<div style="left:0;top:295.15px;width:125px;height:1px;background:#242424"></div>
</div>
<div style="left:997px;top:376px;width:137px;height:11.3px;background:#232323;"></div>
<svg style="left:0;top:0" width="1280" height="720" viewBox="0 0 1280 720" fill="none"><path d="M1072,58.5h5M1072,60.5h5M1072,62.5h5" stroke="#c9c9c9" stroke-width="1"/><circle cx="1009.6" cy="76.6" r="2.6" stroke="#c9c9c9" stroke-width="1.1"/><path d="M1007.8,78.6L1005.2,81.2" stroke="#c9c9c9" stroke-width="1.3" stroke-linecap="round"/><path d="M1012.6,79.4h2.6l-1.3,1.6z" fill="#c9c9c9"/><path d="M1001.6,89.00v5.2l4.6,-2.6z" fill="#d2d2d2"/><path d="M1001.6,100.33v5.2l4.6,-2.6z" fill="#d2d2d2"/><path d="M1001.6,111.66v5.2l4.6,-2.6z" fill="#d2d2d2"/><path d="M1001.6,122.99v5.2l4.6,-2.6z" fill="#d2d2d2"/><path d="M1001.6,134.32v5.2l4.6,-2.6z" fill="#d2d2d2"/><path d="M1001.6,145.65v5.2l4.6,-2.6z" fill="#d2d2d2"/><path d="M1001.6,156.98v5.2l4.6,-2.6z" fill="#d2d2d2"/><path d="M1001.6,168.31v5.2l4.6,-2.6z" fill="#d2d2d2"/><path d="M1001.6,179.64v5.2l4.6,-2.6z" fill="#d2d2d2"/><path d="M1001.6,190.97v5.2l4.6,-2.6z" fill="#d2d2d2"/><path d="M1001.6,202.30v5.2l4.6,-2.6z" fill="#d2d2d2"/><path d="M1001.6,213.63v5.2l4.6,-2.6z" fill="#d2d2d2"/><path d="M1001.6,224.96v5.2l4.6,-2.6z" fill="#d2d2d2"/><path d="M1001.6,236.29v5.2l4.6,-2.6z" fill="#d2d2d2"/><path d="M1001.6,247.62v5.2l4.6,-2.6z" fill="#d2d2d2"/><path d="M1001.6,258.95v5.2l4.6,-2.6z" fill="#d2d2d2"/><path d="M1001.6,270.28v5.2l4.6,-2.6z" fill="#d2d2d2"/><path d="M1001.6,281.61v5.2l4.6,-2.6z" fill="#d2d2d2"/><path d="M1001.6,292.94v5.2l4.6,-2.6z" fill="#d2d2d2"/><path d="M1001.6,304.27v5.2l4.6,-2.6z" fill="#d2d2d2"/><path d="M1001.6,315.60v5.2l4.6,-2.6z" fill="#d2d2d2"/><path d="M1001.6,326.93v5.2l4.6,-2.6z" fill="#d2d2d2"/><path d="M1001.6,338.26v5.2l4.6,-2.6z" fill="#d2d2d2"/><path d="M1001.6,349.59v5.2l4.6,-2.6z" fill="#d2d2d2"/><path d="M1001.6,360.92v5.2l4.6,-2.6z" fill="#d2d2d2"/><path d="M1001.6,372.25v3l2.6,-1.5z" fill="#d2d2d2"/><rect x="1109.4" y="378.4" width="7.6" height="6.4" fill="#c4c4c4"/><rect x="1110.6" y="380.8" width="3.6" height="3" fill="#3a3a3a"/><path d="M1109.4,377.6h3.6" stroke="#c4c4c4" stroke-width="1"/></svg>
<div style="left:1178px;top:51px;width:45px;height:18px;background:#1b1b1b;"></div>
<div class="t" style="left:1145.60px;top:54.62px;color:#e6e6e6;font-size:8.03px;">Info</div>
<div class="t" style="left:1187.00px;top:54.69px;color:#8d8d8d;font-size:7.82px;">Audio</div>
<div style="left:1143.5px;top:81.5px;width:12px;height:11.5px;background:#c406ec;"></div>
<div class="t" style="left:1160.00px;top:71.51px;color:#b0b0b0;font-size:7.76px;">R :</div>
<div class="t" style="left:1172.60px;top:71.51px;color:#b0b0b0;font-size:7.76px;letter-spacing:-0.089px;">195</div>
<div class="t" style="left:1160.00px;top:80.41px;color:#b0b0b0;font-size:7.76px;">G :</div>
<div class="t" style="left:1172.60px;top:80.41px;color:#b0b0b0;font-size:7.76px;letter-spacing:-0.089px;">6</div>
<div class="t" style="left:1160.00px;top:89.31px;color:#b0b0b0;font-size:7.76px;">B :</div>
<div class="t" style="left:1172.60px;top:89.31px;color:#b0b0b0;font-size:7.76px;letter-spacing:-0.089px;">235</div>
<div class="t" style="left:1160.00px;top:98.21px;color:#b0b0b0;font-size:7.76px;">A :</div>
<div class="t" style="left:1172.60px;top:98.21px;color:#b0b0b0;font-size:7.76px;letter-spacing:-0.089px;">255</div>
<div class="t" style="left:1220.00px;top:71.51px;color:#b0b0b0;font-size:7.76px;letter-spacing:-0.227px;">X : 407</div>
<div class="t" style="left:1220.00px;top:80.11px;color:#b0b0b0;font-size:7.76px;letter-spacing:-0.207px;">Y : 428</div>
<div style="left:1205px;top:70px;width:1px;height:36px;background:#1e1e1e;"></div>
<div style="left:1141px;top:111.5px;width:130px;height:1px;background:#1e1e1e;"></div>
<div class="t" style="left:1142.00px;top:114.11px;color:#c93a3a;font-size:7.76px;letter-spacing:-0.072px;">fps: 26,126/29,97 (NOT realtime)</div>
<div class="t" style="left:1145.50px;top:151.91px;color:#dadada;font-size:7.76px;letter-spacing:-0.157px;">Preview</div>
<div style="left:1142px;top:188px;width:114px;height:12.5px;background:#1b1b1b;"></div>
<div class="t" style="left:1146.00px;top:188.91px;color:#d0d0d0;font-size:7.76px;letter-spacing:-0.179px;">RAM Preview Options</div>
<div class="t" style="left:1143.00px;top:202.51px;color:#a0a0a0;font-size:7.76px;letter-spacing:-0.297px;">Frame Rate</div>
<div class="t" style="left:1190.00px;top:202.51px;color:#a0a0a0;font-size:7.76px;letter-spacing:-0.399px;">Skip</div>
<div class="t" style="left:1221.00px;top:202.91px;color:#a0a0a0;font-size:7.76px;letter-spacing:-0.067px;">Resolution</div>
<div style="left:1142px;top:214.5px;width:43px;height:12px;background:#1b1b1b;"></div>
<div style="left:1188px;top:214.5px;width:29px;height:12px;background:#1b1b1b;"></div>
<div style="left:1220px;top:214.5px;width:53px;height:12px;background:#1b1b1b;"></div>
<div class="t" style="left:1146.00px;top:215.11px;color:#d0d0d0;font-size:7.76px;letter-spacing:-0.084px;">(29,97)</div>
<div class="t" style="left:1193.00px;top:215.03px;color:#d0d0d0;font-size:8px;">0</div>
<div class="t" style="left:1224.00px;top:215.07px;color:#d0d0d0;font-size:7.87px;">Half</div>
<div style="left:1142px;top:229px;width:9.4px;height:9.6px;background:#191919;"></div>
<div style="left:1223px;top:229px;width:9.4px;height:9.6px;background:#191919;"></div>
<div class="t" style="left:1153.00px;top:228.51px;color:#8d8d8d;font-size:7.76px;letter-spacing:-0.183px;">From Current Time</div>
<div class="t" style="left:1235.00px;top:228.51px;color:#a8a8a8;font-size:7.76px;letter-spacing:-0.295px;">Full Screen</div>
<div class="t" style="left:1145.50px;top:247.91px;color:#dadada;font-size:7.76px;letter-spacing:-0.216px;">Tracker</div>
<div style="left:1143px;top:267px;width:61.5px;height:13.5px;background:#1f1f1f;"></div>
<div style="left:1208px;top:267px;width:63.5px;height:13.5px;background:#1f1f1f;"></div>
<div style="left:1143px;top:284px;width:61.5px;height:13.5px;background:#1f1f1f;"></div>
<div style="left:1208px;top:284px;width:63.5px;height:13.5px;background:#1f1f1f;"></div>
<div class="t" style="left:1151.00px;top:268.31px;color:#6e6e6e;font-size:7.76px;letter-spacing:-0.322px;">Track Camera</div>
<div class="t" style="left:1213.00px;top:268.31px;color:#6e6e6e;font-size:7.76px;letter-spacing:-0.088px;">Warp Stabilizer</div>
<div class="t" style="left:1152.00px;top:285.11px;color:#6e6e6e;font-size:7.76px;letter-spacing:-0.130px;">Track Motion</div>
<div class="t" style="left:1212.00px;top:285.11px;color:#6e6e6e;font-size:7.76px;letter-spacing:-0.049px;">Stabilize Motion</div>
<div style="left:1196px;top:300px;width:75px;height:13.5px;background:#1b1b1b;"></div>
<div style="left:1196px;top:315.5px;width:75px;height:13.5px;background:#1e1e1e;"></div>
<div style="left:1196px;top:330.5px;width:75px;height:13.5px;background:#1e1e1e;"></div>
<div class="t" style="left:1142.00px;top:301.31px;color:#cccccc;font-size:7.76px;letter-spacing:-0.085px;">Motion Source:</div>
<div class="t" style="left:1199.50px;top:301.31px;color:#e0e0e0;font-size:7.76px;letter-spacing:-0.263px;">None</div>
<div class="t" style="left:1146.00px;top:316.51px;color:#6e6e6e;font-size:7.76px;letter-spacing:-0.154px;">Current Track:</div>
<div class="t" style="left:1199.50px;top:316.51px;color:#6e6e6e;font-size:7.76px;letter-spacing:-0.263px;">None</div>
<div class="t" style="left:1155.00px;top:331.51px;color:#6e6e6e;font-size:7.76px;letter-spacing:-0.192px;">Track Type:</div>
<div class="t" style="left:1199.50px;top:331.51px;color:#6e6e6e;font-size:7.76px;letter-spacing:-0.092px;">Stabilize</div>
<div style="left:1143.5px;top:347px;width:8.6px;height:9px;background:#1a1a1a;"></div>
<div style="left:1189.5px;top:347px;width:8.6px;height:9px;background:#191919;"></div>
<div style="left:1233px;top:347px;width:8.6px;height:9px;background:#191919;"></div>
<div class="t" style="left:1155.00px;top:346.31px;color:#6e6e6e;font-size:7.76px;letter-spacing:-0.090px;">Posit...</div>
<div class="t" style="left:1200.00px;top:346.30px;color:#6e6e6e;font-size:7.79px;">Rotation</div>
<div class="t" style="left:1244.00px;top:346.31px;color:#6e6e6e;font-size:7.76px;letter-spacing:-0.482px;">Scale</div>
<div class="t" style="left:1144.00px;top:360.51px;color:#6e6e6e;font-size:7.76px;">Motion Target:</div>
<div style="left:1146px;top:374px;width:57px;height:13px;background:#1f1f1f;"></div>
<div style="left:1210px;top:374px;width:57px;height:13px;background:#1f1f1f;"></div>
<div class="t" style="left:1153.00px;top:374.91px;color:#6e6e6e;font-size:7.76px;letter-spacing:-0.030px;">Edit Target...</div>
<div class="t" style="left:1222.00px;top:374.91px;color:#6e6e6e;font-size:7.76px;letter-spacing:-0.021px;">Options...</div>
<div class="t" style="left:1145.50px;top:393.91px;color:#dadada;font-size:7.76px;letter-spacing:-0.286px;">Character</div>
<div style="left:1142px;top:413px;width:80px;height:14px;background:#1b1b1b;"></div>
<div style="left:1142px;top:430px;width:80px;height:14px;background:#1b1b1b;"></div>
<div class="t" style="left:1145.50px;top:415.11px;color:#d0d0d0;font-size:7.76px;letter-spacing:-0.155px;">Microsoft PhagsPa</div>
<div class="t" style="left:1145.50px;top:431.51px;color:#d0d0d0;font-size:7.76px;">Bold</div>
<div style="left:1250px;top:424px;width:20.4px;height:18px;background:#ffffff;"></div>
<div style="left:1243px;top:414px;width:18.6px;height:18.4px;background:#fdfdfd;border:0.6px solid #999;"></div>
<div style="left:1225px;top:430.6px;width:14.4px;height:11px;background:#fafafa;border:1px solid #bdbdbd;"></div>
<div style="left:1226px;top:431.6px;width:12.4px;height:4.2px;background:#050505;"></div>
<div style="left:1243px;top:434.4px;width:7px;height:7px;background:#f4f4f4;"></div>
<div class="t" style="left:1157.00px;top:449.74px;color:#909090;font-size:8.24px;letter-spacing:0.066px;">- px</div>
<div class="t" style="left:1157.00px;top:463.91px;color:#7c7c7c;font-size:7.76px;">Metrics</div>
<div class="t" style="left:1232.00px;top:449.91px;color:#b8b8b8;font-size:7.76px;letter-spacing:-0.217px;"><span style="color:#2a67a8">254</span> px</div>
<div class="t" style="left:1232.00px;top:463.83px;color:#2a67a8;font-size:8px;">0</div>
<div style="left:1195px;top:484px;width:76px;height:12.5px;background:#1b1b1b;"></div>
<div class="t" style="left:1157.00px;top:483.94px;color:#909090;font-size:8.24px;letter-spacing:0.066px;">- px</div>
<div class="t" style="left:1157.00px;top:503.91px;color:#b8b8b8;font-size:7.76px;letter-spacing:-0.201px;"><span style="color:#2a67a8">100</span> %</div>
<div class="t" style="left:1232.00px;top:503.91px;color:#b8b8b8;font-size:7.76px;letter-spacing:-0.172px;"><span style="color:#2a67a8">85</span> %</div>
<div class="t" style="left:1157.00px;top:518.71px;color:#b8b8b8;font-size:7.76px;letter-spacing:-0.133px;"><span style="color:#2a67a8">277</span> px</div>
<div class="t" style="left:1232.00px;top:518.71px;color:#b8b8b8;font-size:7.76px;letter-spacing:-0.124px;"><span style="color:#2a67a8">0</span> %</div>
<div class="t" style="left:1145.50px;top:541.11px;color:#dadada;font-size:7.76px;letter-spacing:-0.193px;">Paragraph</div>
<div class="t" style="left:1156.00px;top:579.51px;color:#a8a8a8;font-size:7.76px;letter-spacing:-0.117px;"><span style="color:#2a67a8">0</span> px</div>
<div class="t" style="left:1204.50px;top:579.51px;color:#a8a8a8;font-size:7.76px;letter-spacing:-0.117px;"><span style="color:#2a67a8">0</span> px</div>
<div class="t" style="left:1248.00px;top:579.51px;color:#a8a8a8;font-size:7.76px;letter-spacing:-0.117px;"><span style="color:#2a67a8">0</span> px</div>
<div class="t" style="left:1156.00px;top:589.91px;color:#a8a8a8;font-size:7.76px;letter-spacing:-0.117px;"><span style="color:#2a67a8">0</span> px</div>
<div class="t" style="left:1204.50px;top:592.51px;color:#a8a8a8;font-size:7.76px;letter-spacing:-0.117px;"><span style="color:#2a67a8">0</span> px</div>
<div class="t" style="left:1145.00px;top:614.87px;color:#dadada;font-size:7.87px;">Align</div>
<div style="left:1200px;top:631px;width:73px;height:14px;background:#1b1b1b;"></div>
<div class="t" style="left:1141.00px;top:632.49px;color:#a8a8a8;font-size:7.83px;">Align Layers to:</div>
<div class="t" style="left:1204.00px;top:632.46px;color:#d0d0d0;font-size:7.92px;">Composition</div>
<div class="t" style="left:1141.50px;top:663.88px;color:#a8a8a8;font-size:7.84px;">Distribute Layers:</div>
<svg style="left:0;top:0" width="1280" height="720" viewBox="0 0 1280 720" fill="none"><path d="M1168,58.5h5M1168,60.5h5M1168,62.5h5" stroke="#c9c9c9" stroke-width="1"/><path d="M1214.6,88.6v5M1212.1,91.1h5" stroke="#cfcfcf" stroke-width="1.1"/><path d="M1181,155.5h5M1181,157.5h5M1181,159.5h5" stroke="#c9c9c9" stroke-width="1"/><path d="M1145,171.6v8" stroke="#cfcfcf" stroke-width="1.4"/><path d="M1152.4,171.6v8l-6,-4z" fill="#cfcfcf"/><path d="M1168.4,171.6v8" stroke="#cfcfcf" stroke-width="1.4"/><path d="M1166.4,171.6v8l-5.6,-4z" fill="#cfcfcf"/><path d="M1177.6,171.2v8.8l7.4,-4.4z" fill="#cfcfcf"/><path d="M1193,171.6v8" stroke="#cfcfcf" stroke-width="1.4"/><path d="M1195,171.6v8l5.6,-4z" fill="#cfcfcf"/><path d="M1216.6,171.6v8" stroke="#cfcfcf" stroke-width="1.4"/><path d="M1209,171.6v8l6,-4z" fill="#cfcfcf"/><path d="M1226.6,174.0h2.4l3,-2.8v8.8l-3,-2.8h-2.4z" fill="#cfcfcf"/><path d="M1233.6,173.2q1.6,2.4 0,4.8M1235.2,172.0q2.2,3.6 0,7.2" stroke="#9a9a9a" stroke-width="0.9"/><path d="M1246,174.6v4.6h8.6v-4.6" stroke="#cfcfcf" stroke-width="1.3"/><path d="M1248,174.2h3v-2.2l3.2,3l-3.2,3v-2.2h-3z" fill="#cfcfcf"/><path d="M1261.4,172.2h2v6.8h-2zM1264.4,172.2v6.8l5.4,-3.4z" fill="#7a7a7a"/><path d="M1247,192h6l-3.0,3.5999999999999996z" fill="#e0e0e0"/><path d="M1176.4,218.4h6l-3.0,3.5999999999999996z" fill="#e0e0e0"/><path d="M1207,218.4h6l-3.0,3.5999999999999996z" fill="#e0e0e0"/><path d="M1264,218.4h6l-3.0,3.5999999999999996z" fill="#e0e0e0"/><path d="M1178.5,251.5h5M1178.5,253.5h5M1178.5,255.5h5" stroke="#c9c9c9" stroke-width="1"/><path d="M1260,304.6h6l-3.0,3.5999999999999996z" fill="#e0e0e0"/><path d="M1260,319.6h6l-3.0,3.5999999999999996z" fill="#6e6e6e"/><path d="M1260,334.6h6l-3.0,3.5999999999999996z" fill="#6e6e6e"/><path d="M1145.6,351.6l1.8,2.6l3.6,-6" stroke="#b4b4b4" stroke-width="1.1"/><path d="M1186,397.5h5M1186,399.5h5M1186,401.5h5" stroke="#c9c9c9" stroke-width="1"/><path d="M1213,418.4h6l-3.0,3.5999999999999996z" fill="#e0e0e0"/><path d="M1213,434.6h6l-3.0,3.5999999999999996z" fill="#e0e0e0"/><path d="M1236.4,415.6l1.6,1.6l-2,2l0.6,0.6l-1,1l-0.6,-0.6l-4.2,4.2l-1.8,0.6l-1,1l-0.6,-0.6l1,-1l0.6,-1.8l4.2,-4.2l-0.6,-0.6l1,-1l0.6,0.6z" fill="#d0d0d0"/><path d="M1187,454.4h5l-2.5,3.4z" fill="#9a9a9a"/><path d="M1187,468.4h5l-2.5,3.4z" fill="#9a9a9a"/><path d="M1262,454.4h5l-2.5,3.4z" fill="#9a9a9a"/><path d="M1262,468.4h5l-2.5,3.4z" fill="#9a9a9a"/><path d="M1141.6,454h5M1144.1,454v6.4M1145.4,451.6h7.4M1149.1,451.6v8.8M1147.6,460.4h3" stroke="#d0d0d0" stroke-width="1.2"/><path d="M1141,465l2.6,7l2.6,-7M1146,472.4l3,-7.6l3,7.6M1147.2,470h3.6" stroke="#d0d0d0" stroke-width="1.1"/><path d="M1142,474.6h9" stroke="#d0d0d0" stroke-width="0.8"/><path d="M1213,456.6l2.4,-5.6l2.4,5.6M1213.8,455h3.2M1213,462.6l2.4,-5.4l2.4,5.4M1213.8,461h3.2M1210.2,453v8M1209,454.4l1.2,-1.6l1.2,1.6M1209,459.6l1.2,1.6l1.2,-1.6" stroke="#d0d0d0" stroke-width="0.9"/><rect x="1212" y="465.6" width="11.4" height="7" fill="#d0d0d0"/><path d="M1213.4,467l1.6,4.4l1.6,-4.4M1217.6,471.6l1.8,-4.6l1.8,4.6" stroke="#222" stroke-width="0.9"/><path d="M1212,475h11.4M1212,475l1.4,-1.2M1212,475l1.4,1.2M1223.4,475l-1.4,-1.2M1223.4,475l-1.4,1.2" stroke="#d0d0d0" stroke-width="0.8"/><path d="M1142,486.4h9.6M1142,489.6h9.6M1142,492.8h9.6" stroke="#d0d0d0" stroke-width="1.4"/><path d="M1187,488h5l-2.5,3.4z" fill="#9a9a9a"/><path d="M1262,488.4h6l-3.0,3.5999999999999996z" fill="#e0e0e0"/><path d="M1187,508h5l-2.5,3.4z" fill="#9a9a9a"/><path d="M1187,522.6h5l-2.5,3.4z" fill="#9a9a9a"/><path d="M1262,508h5l-2.5,3.4z" fill="#9a9a9a"/><path d="M1262,522.6h5l-2.5,3.4z" fill="#9a9a9a"/><path d="M1142.4,506v8M1141.2,507.4l1.2,-1.6l1.2,1.6M1141.2,512.6l1.2,1.6l1.2,-1.6M1145.6,506h7M1149.1,506v8M1147.6,514h3" stroke="#d0d0d0" stroke-width="1.1"/><path d="M1212.6,506.4h10M1217.6,506.4v7.2M1215.6,513.6h4" stroke="#d0d0d0" stroke-width="1.6"/><path d="M1212,516.6h11M1212,516.6l1.4,-1.2M1212,516.6l1.4,1.2M1223,516.6l-1.4,-1.2M1223,516.6l-1.4,1.2" stroke="#d0d0d0" stroke-width="0.8"/><path d="M1141.6,527.4l2.6,-7l2.6,7M1142.6,525h3.2" stroke="#d0d0d0" stroke-width="1.1"/><path d="M1148.6,521.4h3M1148.6,523.6h3M1150.1,519v1.4M1150.1,525v4M1148.9,527.6l1.2,1.6l1.2,-1.6" stroke="#d0d0d0" stroke-width="0.9"/><path d="M1141.4,529.6h6" stroke="#d0d0d0" stroke-width="0.8"/><path d="M1213,520v7M1222.6,520v7" stroke="#d0d0d0" stroke-width="0.9"/><circle cx="1217.8" cy="523.4" r="2.2" stroke="#d0d0d0" stroke-width="1"/><path d="M1212.6,529.6h10.4M1212.6,529.6l1.4,-1.2M1212.6,529.6l1.4,1.2M1223,529.6l-1.4,-1.2M1223,529.6l-1.4,1.2" stroke="#d0d0d0" stroke-width="0.8"/><path d="M1188.5,544.5h5M1188.5,546.5h5M1188.5,548.5h5" stroke="#8a8a8a" stroke-width="1"/><path d="M1144.2,562.0h8.6M1144.2,563.9h7M1144.2,565.8h8.6M1144.2,567.7h7M1144.2,569.6h8.6" stroke="#9c9c9c" stroke-width="1.9"/><path d="M1161,562.0h8.6M1161.9,563.9h6.8M1161,565.8h8.6M1161.9,567.7h6.8M1161,569.6h8.6" stroke="#4a8cae" stroke-width="1.9"/><path d="M1178,562.0h8.6M1179.6,563.9h7M1178,565.8h8.6M1179.6,567.7h7M1178,569.6h8.6" stroke="#9c9c9c" stroke-width="1.9"/><path d="M1197.4,562.0h8.6M1197.4,563.9h8.6M1197.4,565.8h8.6M1197.4,567.7h8.6M1197.4,569.6h8.6" stroke="#585858" stroke-width="1.9"/><path d="M1214,562.0h8.6M1214,563.9h8.6M1214,565.8h8.6M1214,567.7h8.6M1214,569.6h8.6" stroke="#585858" stroke-width="1.9"/><path d="M1231,562.0h8.6M1231,563.9h8.6M1231,565.8h8.6M1231,567.7h8.6M1231,569.6h8.6" stroke="#585858" stroke-width="1.9"/><path d="M1250.6,562.0h8.6M1250.6,563.9h8.6M1250.6,565.8h8.6M1250.6,567.7h8.6M1250.6,569.6h8.6" stroke="#585858" stroke-width="1.9"/><path d="M1146.8000000000002,582.4h5.6M1146.8000000000002,584.4h5.6M1146.8000000000002,586.4h5.6M1146.8000000000002,588.4h5.6" stroke="#bdbdbd" stroke-width="1.4"/><path d="M1142.4,585.4h3M1145.4,585.4l-1.4,-1.2M1145.4,585.4l-1.4,1.2" stroke="#dcdcdc" stroke-width="0.9"/><path d="M1194.4,582.6h5.6M1194.4,584.6h5.6M1194.4,586.6h5.6M1194.4,588.6h5.6" stroke="#bdbdbd" stroke-width="1.4"/><path d="M1190,585.6h3M1193,585.6l-1.4,-1.2M1193,585.6l-1.4,1.2" stroke="#dcdcdc" stroke-width="0.9"/><path d="M1238.8000000000002,581.4h5.6M1238.8000000000002,583.4h5.6M1238.8000000000002,585.4h5.6M1238.8000000000002,587.4h5.6" stroke="#bdbdbd" stroke-width="1.4"/><path d="M1234.4,584.4h3M1237.4,584.4l-1.4,-1.2M1237.4,584.4l-1.4,1.2" stroke="#dcdcdc" stroke-width="0.9"/><path d="M1194.4,594.4h5.6M1194.4,596.4h5.6M1194.4,598.4h5.6M1194.4,600.4h5.6" stroke="#bdbdbd" stroke-width="1.4"/><path d="M1190,597.4h3M1193,597.4l-1.4,-1.2M1193,597.4l-1.4,1.2" stroke="#dcdcdc" stroke-width="0.9"/><path d="M1143,593.4v8M1147,593.4v8" stroke="#bdbdbd" stroke-width="1.6"/><path d="M1152.6,597.4h-3.4M1149.2,597.4l1.4,-1.2M1149.2,597.4l1.4,1.2" stroke="#dcdcdc" stroke-width="0.9"/><path d="M1172,618.5h5M1172,620.5h5M1172,622.5h5" stroke="#c9c9c9" stroke-width="1"/><path d="M1264.6,635.6h6.6l-3.3,3.9599999999999995z" fill="#e0e0e0"/><path d="M1146.4,649v10" stroke="#cdcdcd" stroke-width="1.1"/><rect x="1147.6" y="650" width="5" height="3" fill="#cdcdcd"/><rect x="1147.6" y="655" width="8" height="3" stroke="#cdcdcd" stroke-width="0.9"/><path d="M1173.6,648.6v11" stroke="#cdcdcd" stroke-width="1"/><rect x="1171.4" y="650" width="4.4" height="3" fill="#cdcdcd"/><rect x="1169.4" y="655" width="8.4" height="3" stroke="#cdcdcd" stroke-width="0.9"/><path d="M1200.6,649v10" stroke="#cdcdcd" stroke-width="1.1"/><rect x="1194.6" y="650" width="5" height="3" fill="#cdcdcd"/><rect x="1191.6" y="655" width="8" height="3" stroke="#cdcdcd" stroke-width="0.9"/><path d="M1213.6,648.6h10" stroke="#cdcdcd" stroke-width="1.1"/><rect x="1214.4" y="649.8" width="3" height="8" stroke="#cdcdcd" stroke-width="0.9"/><rect x="1219.4" y="649.8" width="3" height="5" fill="#cdcdcd"/><path d="M1236,653.6h11" stroke="#cdcdcd" stroke-width="1"/><rect x="1237.6" y="649.4" width="3" height="8.4" stroke="#cdcdcd" stroke-width="0.9"/><rect x="1242.6" y="651.4" width="3" height="4.4" fill="#cdcdcd"/><path d="M1259,659.4h10.4" stroke="#cdcdcd" stroke-width="1.1"/><rect x="1260.4" y="650.4" width="3" height="8" stroke="#cdcdcd" stroke-width="0.9"/><rect x="1265.4" y="653.4" width="3" height="5" fill="#cdcdcd"/><path d="M1145.6,678.4h10.6M1145.6,683.4h10.6" stroke="#b0b0b0" stroke-width="0.9"/><rect x="1148.4" y="679" width="5" height="2.4" fill="#b0b0b0"/><rect x="1147" y="684" width="8" height="2.6" stroke="#b0b0b0" stroke-width="0.8"/><path d="M1168.4,679.6h10.6M1168.4,684.6h10.6" stroke="#b0b0b0" stroke-width="0.9"/><rect x="1171.4" y="678.4" width="4.6" height="2.4" fill="#b0b0b0"/><rect x="1170" y="683.4" width="7.6" height="2.6" stroke="#b0b0b0" stroke-width="0.8"/><path d="M1191.4,681.6h10.6M1191.4,686.8h10.6" stroke="#b0b0b0" stroke-width="0.9"/><rect x="1194.4" y="678.6" width="4.6" height="2.6" fill="#b0b0b0"/><rect x="1193" y="683.6" width="7.6" height="2.8" stroke="#b0b0b0" stroke-width="0.8"/><path d="M1215,677v10.6M1220,677v10.6" stroke="#b0b0b0" stroke-width="0.9"/><rect x="1215.6" y="678.4" width="2.6" height="8" stroke="#b0b0b0" stroke-width="0.8"/><rect x="1220.6" y="680" width="2.4" height="4.6" fill="#b0b0b0"/><path d="M1239.6,677v10.6M1244.6,677v10.6" stroke="#b0b0b0" stroke-width="0.9"/><rect x="1238.2" y="678.6" width="2.8" height="7.6" stroke="#b0b0b0" stroke-width="0.8"/><rect x="1243.4" y="680" width="2.4" height="4.6" fill="#b0b0b0"/><path d="M1264.4,677v10.6M1269,677v10.6" stroke="#b0b0b0" stroke-width="0.9"/><rect x="1261" y="680" width="2.6" height="4.6" fill="#b0b0b0"/><rect x="1265.4" y="678.6" width="2.8" height="7.6" stroke="#b0b0b0" stroke-width="0.8"/></svg>
<svg style="left:0;top:0" width="1280" height="720" viewBox="0 0 1280 720" fill="none"><path d="M1250.6,441.4L1269.8,424.6" stroke="#d02020" stroke-width="1.3"/><rect x="1259" y="430" width="5" height="5" fill="#232323"/><path d="M1243.4,441L1249.6,434.8" stroke="#d02020" stroke-width="1.1"/><path d="M1263.6,417.6q3.4,-1.6 5.2,2.6M1262.6,417.8l2.4,-1.8v3zM1268.8,421.6l-1.6,-2.2h3z" stroke="#c9c9c9" stroke-width="0.9" fill="#c9c9c9"/></svg>
<div style="left:6px;top:392px;width:69px;height:17px;background:#232323;"></div>
<div class="t" style="left:37.00px;top:394.31px;color:#dedede;font-size:7.76px;letter-spacing:-0.011px;">Tutorial</div>
<div style="left:5px;top:390.2px;width:78px;height:1px;background:#3a6a94;"></div>
<div style="left:82px;top:391px;width:1px;height:18px;background:#3a6a94;"></div>
<div style="left:82px;top:408px;width:1052.8px;height:1px;background:#5f90c0;"></div>
<div style="left:83px;top:409px;width:1051.8px;height:0.8px;background:#1c3650;"></div>
<div style="left:5px;top:391px;width:1px;height:304px;background:#38688f;"></div>
<div style="left:1133.6px;top:408px;width:1.2px;height:287px;background:#5a80a8;"></div>
<div style="left:5px;top:693.5px;width:1129.8px;height:1.5px;background:#456f98;"></div>
<div class="t" style="left:12.50px;top:410.47px;color:#2a78c8;font-size:11.34px;font-weight:bold;">0:00:00:00</div>
<div class="t" style="left:14.00px;top:421.11px;color:#2a6fb4;font-size:7.18px;letter-spacing:-0.340px;">00000 (29.97 fps)</div>
<div style="left:78px;top:414px;width:131px;height:12px;background:#1b1b1b;"></div>
<div style="left:6px;top:433px;width:344px;height:11.6px;background:#2a2a2a;"></div>
<div style="left:50px;top:433px;width:1px;height:11.6px;background:#1c1c1c;"></div>
<div style="left:72.5px;top:433px;width:1px;height:11.6px;background:#1c1c1c;"></div>
<div style="left:94px;top:433px;width:1px;height:11.6px;background:#1c1c1c;"></div>
<div style="left:180px;top:433px;width:1px;height:11.6px;background:#1c1c1c;"></div>
<div style="left:272px;top:433px;width:1px;height:11.6px;background:#1c1c1c;"></div>
<div class="t" style="left:76.50px;top:433.20px;color:#777;font-size:7.5px;">#</div>
<div class="t" style="left:97.50px;top:433.25px;color:#8a8a8a;font-size:7.37px;letter-spacing:-0.614px;">Layer Name</div>
<div class="t" style="left:275.60px;top:433.25px;color:#8a8a8a;font-size:7.37px;letter-spacing:-0.619px;">Parent</div>
<div class="t" style="left:214.4px;top:432.8px;color:#d8d8d8;font-size:10px;font-weight:bold;font-style:italic;font-family:'Liberation Serif',serif;letter-spacing:-0.6px">fx</div>
<div style="left:6px;top:455.44500000000005px;width:344px;height:1px;background:#1f1f1f;"></div>
<div style="left:6px;top:466.79px;width:344px;height:1px;background:#1f1f1f;"></div>
<div style="left:6px;top:478.13500000000005px;width:344px;height:1px;background:#1f1f1f;"></div>
<div style="left:6px;top:489.48px;width:344px;height:1px;background:#1f1f1f;"></div>
<div style="left:6px;top:500.82500000000005px;width:344px;height:1px;background:#1f1f1f;"></div>
<div style="left:6px;top:512.1700000000001px;width:344px;height:1px;background:#1f1f1f;"></div>
<div style="left:6px;top:523.515px;width:344px;height:1px;background:#1f1f1f;"></div>
<div style="left:6px;top:534.86px;width:344px;height:1px;background:#1f1f1f;"></div>
<div style="left:6px;top:546.205px;width:344px;height:1px;background:#1f1f1f;"></div>
<div style="left:6px;top:557.5500000000001px;width:344px;height:1px;background:#1f1f1f;"></div>
<div style="left:6px;top:568.895px;width:344px;height:1px;background:#1f1f1f;"></div>
<div style="left:6px;top:580.24px;width:344px;height:1px;background:#1f1f1f;"></div>
<div style="left:6px;top:591.585px;width:344px;height:1px;background:#1f1f1f;"></div>
<div style="left:6px;top:602.9300000000001px;width:344px;height:1px;background:#1f1f1f;"></div>
<div style="left:6px;top:614.2750000000001px;width:344px;height:1px;background:#1f1f1f;"></div>
<div style="left:6px;top:625.62px;width:344px;height:1px;background:#1f1f1f;"></div>
<div style="left:6px;top:636.965px;width:344px;height:1px;background:#1f1f1f;"></div>
<div style="left:6px;top:648.3100000000001px;width:344px;height:1px;background:#1f1f1f;"></div>
<div style="left:6px;top:659.655px;width:344px;height:1px;background:#1f1f1f;"></div>
<div style="left:6px;top:671.0px;width:344px;height:1px;background:#1f1f1f;"></div>
<div style="left:184.4px;top:444.6px;width:84.4px;height:22.69px;background:#1a1a1a;"></div>
<div style="left:184.4px;top:535.76px;width:84.4px;height:10.745000000000001px;background:#1a1a1a;"></div>
<div style="left:184.4px;top:547.105px;width:84.4px;height:10.745000000000001px;background:#1a1a1a;"></div>
<div style="left:184.4px;top:558.45px;width:84.4px;height:10.745000000000001px;background:#1a1a1a;"></div>
<div style="left:184.4px;top:581.14px;width:84.4px;height:10.745000000000001px;background:#1a1a1a;"></div>
<div class="t" style="left:99.50px;top:444.61px;color:#b4b4b4;font-size:7.76px;letter-spacing:-0.102px;">Fill &amp; Stroke</div>
<div class="t" style="left:188.75px;top:444.61px;color:#e0e0e0;font-size:7.76px;letter-spacing:-0.220px;">Per Character Palette</div>
<div class="t" style="left:99.50px;top:455.96px;color:#b4b4b4;font-size:7.76px;letter-spacing:-0.086px;">Inter-C...cter Blending</div>
<div class="t" style="left:188.75px;top:455.96px;color:#e0e0e0;font-size:7.76px;letter-spacing:-0.043px;">Normal</div>
<div class="t" style="left:88.00px;top:467.30px;color:#b4b4b4;font-size:7.76px;letter-spacing:-0.102px;">Animator 1</div>
<div class="t" style="left:242.75px;top:467.29px;color:#b4b4b4;font-size:7.78px;">Add:</div>
<div class="t" style="left:99.50px;top:478.65px;color:#b4b4b4;font-size:7.76px;letter-spacing:-0.216px;">Range Selector 1</div>
<div style="left:119px;top:490.38px;width:62px;height:10.545px;background:#393939;"></div>
<div style="left:131.5px;top:501.725px;width:49.5px;height:10.545px;background:#393939;"></div>
<div style="left:119px;top:513.07px;width:62px;height:10.545px;background:#393939;"></div>
<div class="t" style="left:122.00px;top:489.99px;color:#c8c8c8;font-size:7.76px;letter-spacing:-0.178px;">Start</div>
<div class="t" style="left:134.00px;top:501.34px;color:#c8c8c8;font-size:7.76px;letter-spacing:-0.603px;">End</div>
<div class="t" style="left:122.00px;top:512.68px;color:#c8c8c8;font-size:7.76px;">Offset</div>
<div style="left:183.8px;top:489.78000000000003px;width:12.4px;height:11.545px;background:#0c0c0c;"></div>
<div style="left:184.6px;top:490.48px;width:10.8px;height:10px;background:#fb93d6;"></div>
<div class="t" style="left:185.30px;top:489.69px;color:#9a2a80;font-size:7.76px;letter-spacing:-0.529px;">0,0</div>
<div style="left:183.8px;top:501.12500000000006px;width:12.4px;height:11.545px;background:#0c0c0c;"></div>
<div style="left:184.6px;top:501.82500000000005px;width:10.8px;height:10px;background:#a5e6fd;"></div>
<div class="t" style="left:185.30px;top:501.04px;color:#2a7fb5;font-size:7.76px;letter-spacing:-0.529px;">0,0</div>
<div style="left:183.8px;top:512.47px;width:12.4px;height:11.545px;background:#0c0c0c;"></div>
<div style="left:184.6px;top:513.1700000000001px;width:10.8px;height:10px;background:#d6f6bd;"></div>
<div class="t" style="left:185.30px;top:512.38px;color:#3f8058;font-size:7.76px;letter-spacing:-0.529px;">0,0</div>
<div class="t" style="left:110.50px;top:524.03px;color:#b4b4b4;font-size:7.76px;letter-spacing:-0.127px;">Advanced</div>
<div class="t" style="left:122.00px;top:535.37px;color:#b4b4b4;font-size:7.76px;letter-spacing:-0.036px;">Units</div>
<div class="t" style="left:188.75px;top:535.37px;color:#e0e0e0;font-size:7.77px;">Index</div>
<div class="t" style="left:122.00px;top:546.72px;color:#b4b4b4;font-size:7.76px;letter-spacing:-0.251px;">Based On</div>
<div class="t" style="left:188.75px;top:546.72px;color:#e0e0e0;font-size:7.76px;letter-spacing:-0.245px;">Characters</div>
<div class="t" style="left:132.50px;top:558.05px;color:#b4b4b4;font-size:7.8px;">Mode</div>
<div class="t" style="left:188.75px;top:558.06px;color:#e0e0e0;font-size:7.76px;letter-spacing:-0.144px;">Subtract</div>
<div class="t" style="left:132.50px;top:569.41px;color:#b4b4b4;font-size:7.76px;letter-spacing:-0.124px;">Amount</div>
<div class="t" style="left:184.50px;top:569.41px;color:#2b72bc;font-size:7.76px;letter-spacing:-0.087px;">100%</div>
<div class="t" style="left:122.00px;top:580.75px;color:#b4b4b4;font-size:7.76px;letter-spacing:-0.488px;">Shape</div>
<div class="t" style="left:188.75px;top:580.75px;color:#e0e0e0;font-size:7.76px;letter-spacing:-0.254px;">Square</div>
<div class="t" style="left:132.50px;top:592.10px;color:#b4b4b4;font-size:7.76px;letter-spacing:-0.164px;">Smoothness</div>
<div class="t" style="left:184.50px;top:592.10px;color:#2b72bc;font-size:7.76px;letter-spacing:-0.087px;">100%</div>
<div class="t" style="left:132.50px;top:603.44px;color:#b4b4b4;font-size:7.76px;letter-spacing:-0.200px;">Ease High</div>
<div class="t" style="left:184.50px;top:603.37px;color:#2b72bc;font-size:7.96px;">0%</div>
<div class="t" style="left:132.50px;top:614.79px;color:#b4b4b4;font-size:7.76px;letter-spacing:-0.197px;">Ease Low</div>
<div class="t" style="left:184.50px;top:614.72px;color:#2b72bc;font-size:7.96px;">0%</div>
<div class="t" style="left:122.00px;top:626.13px;color:#b4b4b4;font-size:7.76px;letter-spacing:-0.095px;">Randomi...rder</div>
<div class="t" style="left:184.50px;top:626.05px;color:#2b72bc;font-size:7.98px;">Off</div>
<div class="t" style="left:110.00px;top:637.48px;color:#b4b4b4;font-size:7.76px;letter-spacing:-0.482px;">Scale</div>
<div class="t" style="left:196.00px;top:637.44px;color:#2b72bc;font-size:7.85px;">0,0,0,0%</div>
<div class="t" style="left:110.00px;top:648.82px;color:#b4b4b4;font-size:7.76px;letter-spacing:-0.044px;">Opacity</div>
<div class="t" style="left:184.50px;top:648.75px;color:#2b72bc;font-size:7.96px;">0%</div>
<div class="t" style="left:76.50px;top:660.17px;color:#b4b4b4;font-size:7.76px;letter-spacing:-0.063px;">Transform</div>
<div class="t" style="left:184.00px;top:660.17px;color:#2b72bc;font-size:7.76px;letter-spacing:-0.254px;">Reset</div>
<div style="left:6px;top:671.5px;width:344px;height:11.345px;background:#2a2a2a;"></div>
<div style="left:8.6px;top:672.3px;width:9.6px;height:9.8px;background:#141414;"></div>
<div style="left:38.6px;top:672.3px;width:8px;height:9.8px;background:#1a1a1a;"></div>
<div style="left:29px;top:672.5px;width:8.4px;height:9.4px;background:#1a1a1a;"></div>
<div style="left:62.5px;top:672.8px;width:8.6px;height:8.8px;background:#d13c3c;"></div>
<div class="t" style="left:77.00px;top:671.43px;color:#e4e4e4;font-size:8px;font-weight:bold;">2</div>
<div style="left:96.5px;top:672.8px;width:8.6px;height:8.8px;background:#c406ec;"></div>
<div class="t" style="left:108.50px;top:671.51px;color:#e8e8e8;font-size:7.76px;letter-spacing:-0.320px;font-weight:bold;">BG</div>
<div style="left:194px;top:672.5px;width:9px;height:9.4px;background:#1a1a1a;"></div>
<div style="left:234px;top:672.5px;width:8.4px;height:9.4px;background:#1a1a1a;"></div>
<div style="left:244px;top:672.5px;width:8.4px;height:9.4px;background:#1a1a1a;"></div>
<div style="left:253.6px;top:672.5px;width:8.4px;height:9.4px;background:#1a1a1a;"></div>
<div style="left:288px;top:672.1px;width:59px;height:10.145000000000001px;background:#1f1f1f;"></div>
<div class="t" style="left:291.50px;top:671.51px;color:#e0e0e0;font-size:7.76px;letter-spacing:-0.013px;">None</div>
<div style="left:6px;top:682.845px;width:344px;height:11.154999999999973px;background:#232323;"></div>
<div style="left:184px;top:683.445px;width:88px;height:10px;background:#1a1a1a;"></div>
<div class="t" style="left:189.50px;top:683.06px;color:#d8d8d8;font-size:7.76px;letter-spacing:-0.536px;">Toggle Switches / Modes</div>
<div class="t" style="left:33.00px;top:682.75px;color:#c8c8c8;font-size:8.08px;">{}</div>
<div style="left:350px;top:409px;width:12px;height:285px;background:#232323;"></div>
<div style="left:350px;top:433px;width:11px;height:11.6px;background:#2a2a2a;"></div>
<div style="left:350px;top:433px;width:1px;height:11.6px;background:#1c1c1c;"></div>
<div style="left:350px;top:444.6px;width:11px;height:59px;background:#181818;"></div>
<div style="left:349.4px;top:433px;width:1px;height:249px;background:#1b1b1b;"></div>
<div style="left:360.6px;top:444.6px;width:1px;height:237px;background:#1b1b1b;"></div>
<div style="left:362px;top:409px;width:773px;height:4px;background:#232323;"></div>
<div style="left:362px;top:412.6px;width:757px;height:5.6px;background:#3b3933;"></div>
<div style="left:365.8px;top:412.6px;width:262.4px;height:5.6px;background:#8b8b8b;"></div>
<div style="left:362px;top:418.2px;width:760px;height:14px;background:#1f1f1f;"></div>
<div style="left:365.8px;top:432.2px;width:756.2px;height:9.8px;background:#727272;"></div>
<div style="left:365.8px;top:442px;width:756.2px;height:3.8px;background:#0f4a12;"></div>
<div style="left:365.8px;top:442.7px;width:756.2px;height:2.2px;background:#3fb842;"></div>
<div style="left:362px;top:444.6px;width:760px;height:217.6px;background:#313131;"></div>
<div style="left:362px;top:444.6px;width:4px;height:217.6px;background:#222222;"></div>
<div style="left:362px;top:662.2px;width:760px;height:19.6px;background:#232323;"></div>
<div style="left:1122px;top:409px;width:12.5px;height:285px;background:#232323;"></div>
<svg style="left:0;top:0" width="1280" height="720" viewBox="0 0 1280 720" fill="none"><path d="M403.42,444.6V662M441.04,444.6V662M478.66,444.6V662M516.28,444.6V662M553.90,444.6V662M591.52,444.6V662M629.14,444.6V662M666.76,444.6V662M704.38,444.6V662M742.00,444.6V662M779.62,444.6V662M817.24,444.6V662M854.86,444.6V662M892.48,444.6V662M930.10,444.6V662M967.72,444.6V662M1005.34,444.6V662M1042.96,444.6V662M1080.58,444.6V662M1118.20,444.6V662M366,457.4H1122M366,504.8H1122M366,552.2H1122M366,599.6H1122" stroke="#1c1c1c" stroke-width="1.3"/></svg>
<div class="t" style="left:394.22px;top:417.91px;color:#cfcfcf;font-size:7.18px;letter-spacing:-0.260px;">00:15f</div>
<div class="t" style="left:431.84px;top:417.91px;color:#cfcfcf;font-size:7.18px;letter-spacing:-0.260px;">01:00f</div>
<div class="t" style="left:469.46px;top:417.91px;color:#cfcfcf;font-size:7.18px;letter-spacing:-0.260px;">01:15f</div>
<div class="t" style="left:507.08px;top:417.91px;color:#cfcfcf;font-size:7.18px;letter-spacing:-0.260px;">02:00f</div>
<div class="t" style="left:544.70px;top:417.91px;color:#cfcfcf;font-size:7.18px;letter-spacing:-0.260px;">02:15f</div>
<div class="t" style="left:582.32px;top:417.91px;color:#cfcfcf;font-size:7.18px;letter-spacing:-0.260px;">03:00f</div>
<div class="t" style="left:619.94px;top:417.91px;color:#cfcfcf;font-size:7.18px;letter-spacing:-0.260px;">03:15f</div>
<div class="t" style="left:657.56px;top:417.91px;color:#cfcfcf;font-size:7.18px;letter-spacing:-0.260px;">04:00f</div>
<div class="t" style="left:695.18px;top:417.91px;color:#cfcfcf;font-size:7.18px;letter-spacing:-0.260px;">04:15f</div>
<div class="t" style="left:732.80px;top:417.91px;color:#cfcfcf;font-size:7.18px;letter-spacing:-0.260px;">05:00f</div>
<div class="t" style="left:770.42px;top:417.91px;color:#cfcfcf;font-size:7.18px;letter-spacing:-0.260px;">05:15f</div>
<div class="t" style="left:808.04px;top:417.91px;color:#cfcfcf;font-size:7.18px;letter-spacing:-0.260px;">06:00f</div>
<div class="t" style="left:845.66px;top:417.91px;color:#cfcfcf;font-size:7.18px;letter-spacing:-0.260px;">06:15f</div>
<div class="t" style="left:883.28px;top:417.91px;color:#cfcfcf;font-size:7.18px;letter-spacing:-0.260px;">07:00f</div>
<div class="t" style="left:920.90px;top:417.91px;color:#cfcfcf;font-size:7.18px;letter-spacing:-0.260px;">07:15f</div>
<div class="t" style="left:958.52px;top:417.91px;color:#cfcfcf;font-size:7.18px;letter-spacing:-0.260px;">08:00f</div>
<div class="t" style="left:996.14px;top:417.91px;color:#cfcfcf;font-size:7.18px;letter-spacing:-0.260px;">08:15f</div>
<div class="t" style="left:1033.76px;top:417.91px;color:#cfcfcf;font-size:7.18px;letter-spacing:-0.260px;">09:00f</div>
<div class="t" style="left:1071.38px;top:417.91px;color:#cfcfcf;font-size:7.18px;letter-spacing:-0.260px;">09:15f</div>
<div style="left:1100px;top:418px;width:19.5px;height:14px;overflow:hidden"><div class="t" style="left:6.5px;top:-0.3px;color:#cfcfcf;font-size:7.4px;letter-spacing:-0.1px">10:00f</div></div>
<div class="t" style="left:371.00px;top:418.44px;color:#cfcfcf;font-size:7.4px;">f</div>
<div class="t" style="left:367.50px;top:446.11px;color:#c6c6c6;font-size:7.76px;letter-spacing:-0.076px;">20 units/sec</div>
<div class="t" style="left:367.50px;top:493.51px;color:#c6c6c6;font-size:7.76px;letter-spacing:-0.316px;">15</div>
<div class="t" style="left:367.50px;top:541.11px;color:#c6c6c6;font-size:7.76px;letter-spacing:-0.316px;">10</div>
<div class="t" style="left:367.50px;top:588.43px;color:#c6c6c6;font-size:8px;">5</div>
<div class="t" style="left:367.50px;top:635.83px;color:#c6c6c6;font-size:8px;">0</div>
<div style="left:362px;top:683px;width:71px;height:10.4px;background:#242424;"></div>
<div style="left:433px;top:683px;width:236.5px;height:10.4px;background:#1f1f1f;"></div>
<div style="left:669.5px;top:683px;width:452.5px;height:10.4px;background:#141414;"></div>
<svg style="left:0;top:0" width="1280" height="720" viewBox="0 0 1280 720" fill="none"><path d="M11.8,398.2l4,4M15.8,398.2l-4,4" stroke="#b8b8b8" stroke-width="0.9"/><rect x="22.4" y="395.6" width="7.2" height="7.4" fill="#c9b287"/><path d="M70.6,397.5h5M70.6,399.5h5M70.6,401.5h5" stroke="#c9c9c9" stroke-width="1"/><circle cx="83.6" cy="418.8" r="2.6" stroke="#c9c9c9" stroke-width="1.1"/><path d="M81.8,420.8L79.2,423.4" stroke="#c9c9c9" stroke-width="1.3" stroke-linecap="round"/><path d="M87.6,421.6h2.6l-1.3,1.6z" fill="#c9c9c9"/><path d="M220,418h5M225,418v4h4M225,418h4M229,416.8v2.4M229,420.8v2.4" stroke="#cdcdcd" stroke-width="1.1"/><circle cx="229.4" cy="424.6" r="0.8" fill="#cdcdcd"/><path d="M244.6,414l0.8,1.8l1.8,-0.8l-0.8,1.8l1.8,0.8l-1.8,0.8l-1,-0.4l-0.8,1.6l-0.8,-1.8l-1.8,0.8l0.8,-1.8l-1.8,-0.8l1.8,-0.8l-0.8,-1.8l1.8,0.8z" fill="#cdcdcd"/><path d="M249,418.4l3.6,1.4v4l-3.6,1.6l-3.6,-1.6v-4zM245.6,419.8l3.4,1.4l3.4,-1.4M249,421.4v3.8" stroke="#cdcdcd" stroke-width="0.9"/><path d="M265.4,421.6a4.6,4.6 0 0 1 9.2,0z" fill="#cdcdcd"/><path d="M270,416v5" stroke="#333" stroke-width="0.9"/><path d="M264.6,422.4h10.8v2.4h-10.8z" fill="#9a9a9a"/><rect x="285.4" y="414.4" width="6.6" height="8.4" fill="#cdcdcd"/><rect x="283" y="417" width="2.6" height="7.4" fill="#aaa"/><rect x="287.4" y="416" width="2.6" height="3" fill="#333"/><path d="M283,424.4h9" stroke="#aaa" stroke-width="0.9"/><ellipse cx="305" cy="419.6" rx="5.2" ry="3.4" transform="rotate(-38 305 419.6)" fill="#9a9a9a" stroke="#cdcdcd" stroke-width="0.9"/><circle cx="306.6" cy="418.4" r="1.6" fill="#cdcdcd"/><rect x="321.4" y="414.4" width="3" height="3" fill="#cdcdcd"/><rect x="321.4" y="418.4" width="3" height="3" fill="#cdcdcd"/><rect x="321.4" y="422.4" width="3" height="2.4" fill="#cdcdcd"/><circle cx="329" cy="418.4" r="2.8" fill="#cdcdcd"/><path d="M327.8,421h2.4v2.8h-2.4z" fill="#cdcdcd"/><rect x="339.8" y="416" width="9.4" height="8.6" fill="#1f5a8a" stroke="#3fa0e0" stroke-width="1"/><path d="M341,415v2M344.5,415v2M348,415v2" stroke="#3fa0e0" stroke-width="1"/><path d="M341.4,418.6q3,0 4,3t2.6,2" stroke="#9ad4ff" stroke-width="0.9"/><path d="M9.2,439q4.4,-5.6 8.8,0q-4.4,5.6 -8.8,0z" fill="#c6c6c6"/><circle cx="13.6" cy="439" r="1.7" fill="#222"/><circle cx="14.1" cy="438.5" r="0.6" fill="#c6c6c6"/><path d="M19.4,437.6h2l2.6,-2.4v7.6l-2.6,-2.4h-2z" fill="#c6c6c6"/><path d="M25.2,437q1.2,2 0,4M26.6,436q1.8,3 0,6" stroke="#8a8a8a" stroke-width="0.8"/><circle cx="33" cy="439" r="2.3" fill="#c6c6c6"/><rect x="39.6" y="438" width="6" height="4.6" fill="#c6c6c6"/><path d="M40.800000000000004,438v-1.2a1.8,1.8 0 0 1 3.6,0v1.2" stroke="#c6c6c6" stroke-width="1.1"/><path d="M61.6,440l4.4,-4.6h3.4v3.4l-4.4,4.6z" fill="#c6c6c6"/><circle cx="67.6" cy="437.2" r="0.8" fill="#222"/><path d="M184.6,439.6a3.8,3.8 0 0 1 7.6,0zM188.4,435.6v6.6M186.4,442.2h1.6" stroke="#c6c6c6" stroke-width="1" fill="#c6c6c6"/><circle cx="199" cy="439" r="1.6" fill="#c6c6c6"/><path d="M199,435.4v7.2M195.4,439h7.2M196.4,436.4l5.2,5.2M201.6,436.4l-5.2,5.2" stroke="#c6c6c6" stroke-width="0.8"/><path d="M205.6,435.4l6,7" stroke="#c6c6c6" stroke-width="1"/><rect x="224.6" y="434.8" width="7.4" height="8" fill="#c6c6c6"/><path d="M226,437h4.6M226,440h4.6" stroke="#333" stroke-width="1"/><ellipse cx="238.6" cy="439" rx="4.2" ry="2.4" transform="rotate(-38 238.6 439)" stroke="#c6c6c6" stroke-width="0.9" fill="#777"/><circle cx="248.6" cy="439" r="3.6" fill="#111" stroke="#c6c6c6" stroke-width="0.9"/><path d="M248.6,435.4a3.6,3.6 0 0 0 0,7.2z" fill="#c6c6c6"/><path d="M258.4,435l3.4,1.4v4.2l-3.4,1.8l-3.4,-1.8v-4.2zM255,436.4l3.4,1.6l3.4,-1.6M258.4,438v4.4" stroke="#c6c6c6" stroke-width="0.9"/><path d="M260,448.40000000000003h6.2l-3.1,3.7199999999999998z" fill="#e0e0e0"/><path d="M260,459.74500000000006h6.2l-3.1,3.7199999999999998z" fill="#e0e0e0"/><path d="M77,470.89000000000004h5.6l-2.8,4.6z" fill="#d8d8d8"/><circle cx="265" cy="473.09000000000003" r="3.7" fill="#dcdcdc"/><path d="M263.8,471.09000000000003v4l3.2,-2z" fill="#222"/><path d="M88.5,482.23500000000007h5.6l-2.8,4.6z" fill="#d8d8d8"/><path d="M9.2,473.09000000000003q4.4,-5.6 8.8,0q-4.4,5.6 -8.8,0z" fill="#c6c6c6"/><circle cx="13.6" cy="473.09000000000003" r="1.7" fill="#222"/><circle cx="14.1" cy="472.59000000000003" r="0.6" fill="#c6c6c6"/><path d="M9.2,484.43500000000006q4.4,-5.6 8.8,0q-4.4,5.6 -8.8,0z" fill="#c6c6c6"/><circle cx="13.6" cy="484.43500000000006" r="1.7" fill="#222"/><circle cx="14.1" cy="483.93500000000006" r="0.6" fill="#c6c6c6"/><circle cx="112.4" cy="495.88" r="2.9" stroke="#d4d4d4" stroke-width="1.3"/><path d="M110.8,491.38h3.2M112.4,491.88v1.2M112.4,495.88l1.3,-1.5" stroke="#d4d4d4" stroke-width="1.1"/><circle cx="112.4" cy="507.225" r="2.9" stroke="#3fa0e8" stroke-width="1.3"/><path d="M110.8,502.725h3.2M112.4,503.225v1.2M112.4,507.225l1.3,-1.5" stroke="#3fa0e8" stroke-width="1.1"/><circle cx="112.4" cy="518.57" r="2.9" stroke="#d4d4d4" stroke-width="1.3"/><path d="M110.8,514.07h3.2M112.4,514.57v1.2M112.4,518.57l1.3,-1.5" stroke="#d4d4d4" stroke-width="1.1"/><path d="M121,503.725v7h8M122,509.32500000000005l2.4,-3.4l1.6,1.4l2.6,-3" stroke="#d0d0d0" stroke-width="0.9"/><path d="M15.2,504.32500000000005v5.6l-3.4,-2.8z" fill="#4c4c4c"/><path d="M23,503.52500000000003l3.6,3.6l-3.6,3.6l-3.6,-3.6z" fill="#3fbde8"/><path d="M31.2,504.32500000000005v5.6l3.4,-2.8z" fill="#d0d0d0"/><path d="M99.5,527.615h5.6l-2.8,4.6z" fill="#d8d8d8"/><path d="M260,539.16h6.2l-3.1,3.7199999999999998z" fill="#e0e0e0"/><path d="M260,550.505h6.2l-3.1,3.7199999999999998z" fill="#e0e0e0"/><path d="M260,561.85h6.2l-3.1,3.7199999999999998z" fill="#e0e0e0"/><circle cx="123.4" cy="563.95" r="2.9" stroke="#d4d4d4" stroke-width="1.3"/><path d="M121.8,559.45h3.2M123.4,559.95v1.2M123.4,563.95l1.3,-1.5" stroke="#d4d4d4" stroke-width="1.1"/><circle cx="123.4" cy="575.295" r="2.9" stroke="#d4d4d4" stroke-width="1.3"/><path d="M121.8,570.795h3.2M123.4,571.295v1.2M123.4,575.295l1.3,-1.5" stroke="#d4d4d4" stroke-width="1.1"/><path d="M260,584.54h6.2l-3.1,3.7199999999999998z" fill="#e0e0e0"/><circle cx="123.4" cy="597.985" r="2.9" stroke="#d4d4d4" stroke-width="1.3"/><path d="M121.8,593.485h3.2M123.4,593.985v1.2M123.4,597.985l1.3,-1.5" stroke="#d4d4d4" stroke-width="1.1"/><circle cx="123.4" cy="609.33" r="2.9" stroke="#d4d4d4" stroke-width="1.3"/><path d="M121.8,604.83h3.2M123.4,605.33v1.2M123.4,609.33l1.3,-1.5" stroke="#d4d4d4" stroke-width="1.1"/><circle cx="123.4" cy="620.6750000000001" r="2.9" stroke="#d4d4d4" stroke-width="1.3"/><path d="M121.8,616.1750000000001h3.2M123.4,616.6750000000001v1.2M123.4,620.6750000000001l1.3,-1.5" stroke="#d4d4d4" stroke-width="1.1"/><circle cx="101.0" cy="643.365" r="2.9" stroke="#d4d4d4" stroke-width="1.3"/><path d="M99.39999999999999,638.865h3.2M101.0,639.365v1.2M101.0,643.365l1.3,-1.5" stroke="#d4d4d4" stroke-width="1.1"/><rect x="183.8" y="641.2650000000001" width="4.4" height="3.6" rx="1.6" stroke="#d0d0d0" stroke-width="1"/><rect x="187.4" y="641.2650000000001" width="4.4" height="3.6" rx="1.6" stroke="#d0d0d0" stroke-width="1"/><circle cx="101.0" cy="654.71" r="2.9" stroke="#d4d4d4" stroke-width="1.3"/><path d="M99.39999999999999,650.21h3.2M101.0,650.71v1.2M101.0,654.71l1.3,-1.5" stroke="#d4d4d4" stroke-width="1.1"/><path d="M66,663.155v5.6l4.8,-2.8z" fill="#d8d8d8"/><path d="M9.2,677.3q4.4,-5.6 8.8,0q-4.4,5.6 -8.8,0z" fill="#c6c6c6"/><circle cx="13.6" cy="677.3" r="1.7" fill="#222"/><circle cx="14.1" cy="676.8" r="0.6" fill="#c6c6c6"/><rect x="39.6" y="676.1" width="6" height="4.6" fill="#d4d4d4"/><path d="M40.800000000000004,676.1v-1.2a1.8,1.8 0 0 1 3.6,0v1.2" stroke="#d4d4d4" stroke-width="1.1"/><path d="M54.6,674.5v5.6l4.8,-2.8z" fill="#d8d8d8"/><path d="M184.8,678.1a3.6,3.6 0 0 1 7.2,0zM188.4,674.5v6M186.6,680.9h1.6" stroke="#d0d0d0" stroke-width="1" fill="#d0d0d0"/><path d="M205.8,680.9l6,-7" stroke="#e0e0e0" stroke-width="1.1"/><path d="M279.6,677.3a1.2,1.2 0 1 1 1.2,1.2a2.4,2.4 0 1 1 2.4,-2.4a3.4,3.4 0 0 1 -3.4,4.6" stroke="#d0d0d0" stroke-width="0.9"/><path d="M338,675.3h6.2l-3.1,3.7199999999999998z" fill="#e0e0e0"/><path d="M10,684.845l4,-1l3,5.6l-4,2.6z" fill="#2f7fc8" stroke="#5aa8e8" stroke-width="0.8"/><circle cx="24.6" cy="687.445" r="2.6" stroke="#c8c8c8" stroke-width="1"/><rect x="25.4" y="687.445" width="4" height="4" stroke="#c8c8c8" stroke-width="1" fill="#232323"/><path d="M403.42,429.8V431.8M441.04,429V431.8M478.66,429.8V431.8M516.28,429V431.8M553.90,429.8V431.8M591.52,429V431.8M629.14,429.8V431.8M666.76,429V431.8M704.38,429.8V431.8M742.00,429V431.8M779.62,429.8V431.8M817.24,429V431.8M854.86,429.8V431.8M892.48,429V431.8M930.10,429.8V431.8M967.72,429V431.8M1005.34,429.8V431.8M1042.96,429V431.8M1080.58,429.8V431.8M1118.20,429V431.8" stroke="#9a9a9a" stroke-width="0.9"/><path d="M361,647H1121.6" stroke="#d795b8" stroke-width="2"/><path d="M361,647H1121.6" stroke="#f4dde8" stroke-width="0.8"/><path d="M366.2,421V662" stroke="#9c3232" stroke-width="1.2"/><path d="M366.2,647C378.2,397.7 394.2,397.7 406.2,647C423.0,443.0 459.4,443.0 476.2,647" stroke="#cdeef8" stroke-width="1.5" stroke-linejoin="bevel"/><rect x="364.59999999999997" y="645.4" width="3.2" height="3.2" fill="#eef6f8"/><rect x="404.59999999999997" y="645.4" width="3.2" height="3.2" fill="#eef6f8"/><rect x="474.59999999999997" y="645.4" width="3.2" height="3.2" fill="#eef6f8"/><path d="M365.6,412.6h-2.2q-2.2,2.8 0,5.6h2.2z" fill="#9fd0f0"/><path d="M626.4,412.4h3.2v2.4l-1.6,1.4l-1.6,-1.4z" fill="#6fb0e8"/><rect x="362.2" y="432.4" width="3.4" height="9.6" rx="1.2" fill="#9fd0f0"/><path d="M362.4,422h8.2v4.6l-4.1,4.6l-4.1,-4.6z" fill="#5fb4ee"/><path d="M364.6,424.6h3.8M366.5,424.6v3.4" stroke="#e8f6ff" stroke-width="0.9"/><path d="M1125,433h6.6v5.6l-3.3,3.2l-3.3,-3.2z" fill="#8a8a8a" stroke="#b8b8b8" stroke-width="0.7"/><circle cx="1127.6" cy="451" r="3" fill="#c8c8c8"/><rect x="1126.6" y="450" width="5.4" height="4.6" fill="#c8c8c8" stroke="#333" stroke-width="0.6"/><path d="M1124.6,455.4h7" stroke="#c8c8c8" stroke-width="0.9"/><path d="M365,691l2.6,-3l2.6,3z" fill="#c8c8c8"/><path d="M381,688.6h37" stroke="#3a3a3a" stroke-width="1"/><path d="M398.4,692v-6l3,-2.4l3,2.4v6z" fill="#8a8a8a"/><path d="M418,691.4l4.4,-5.4l2.6,3l1.6,-1.6l3.4,4z" fill="#c8c8c8"/></svg>
<div style="left:600.4px;top:668px;width:15.8px;height:13.4px;background:#040404;"></div>
<svg style="left:0;top:0" width="1280" height="720" viewBox="0 0 1280 720" fill="none"><g transform="translate(0,1.6)"><path d="M586.4,673.4q5,-5.6 10,0q-5,5.6 -10,0z" fill="#d0d0d0"/><circle cx="591.4" cy="673.4" r="1.9" fill="#222"/><rect x="596.6" y="676.6" width="1.3" height="1.3" fill="#d0d0d0"/><rect x="602.6" y="669.6" width="9" height="7" stroke="#c8c8c8" stroke-width="1.1"/><rect x="604.6" y="671.4" width="5" height="3.4" fill="#8a8a8a"/><rect x="613.2" y="676.6" width="1.3" height="1.3" fill="#c8c8c8"/><rect x="620" y="669" width="8.4" height="8.4" stroke="#58b4e0" stroke-width="1.3"/><path d="M624.2,668.4v9.6M619.4,673.2h9.6" stroke="#3d88b8" stroke-width="1"/><rect x="623.4" y="672.4" width="1.6" height="1.6" fill="#9adcf8"/><path d="M638.6,677v-3.6a3.1,3.1 0 0 1 6.2,0v3.6" stroke="#3a96e0" stroke-width="2.3"/><path d="M637.4,676.2h2.4v1.6h-2.4zM643.6,676.2h2.4v1.6h-2.4z" fill="#9ad0f8"/><path d="M670.6,669v8.4M669,670.8l1.6,-2l1.6,2M669,675.6l1.6,2l1.6,-2" stroke="#4aa4e8" stroke-width="1.1"/><circle cx="675.6" cy="671.6" r="2.5" stroke="#6ab8ea" stroke-width="1.2"/><path d="M677.4,673.6l3,3.2" stroke="#6ab8ea" stroke-width="1.4"/><rect x="686" y="669.4" width="11" height="8.6" stroke="#6e6e6e" stroke-width="1"/><path d="M688,668v2M691.5,668v2M695,668v2" stroke="#6e6e6e" stroke-width="0.9"/><path d="M687.4,671.4q3,0.4 4.4,3t3.6,2.4" stroke="#6e6e6e" stroke-width="0.9"/><rect x="702.4" y="669.4" width="11" height="8.6" fill="#bdbdbd" stroke="#d0d0d0" stroke-width="1"/><path d="M704.4,668v2M708,668v2M711.6,668v2" stroke="#d0d0d0" stroke-width="0.9"/><path d="M703.6,672.6q2.4,-1.4 5,0t4.6,-0.6M703.6,675.4q2.4,-1.4 5,0t4.6,-0.6" stroke="#444" stroke-width="0.9"/><path d="M735.4,672.4h3l2,-2.4l2,5l2,-3.4h1.6M736,677.6l3,-2l3,1.4l3,-2" stroke="#707070" stroke-width="0.9"/><path d="M775,669.6l3.6,3.8l-3.6,3.8l-3.6,-3.8z" fill="#707070"/><rect x="779" y="677" width="1.2" height="1.2" fill="#707070"/><rect x="785.4" y="672.6" width="3.2" height="6" stroke="#707070" stroke-width="0.9"/><rect x="791" y="669" width="3.6" height="3.6" stroke="#707070" stroke-width="0.9"/><path d="M788.6,675l2.6,-3" stroke="#707070" stroke-width="0.9"/><rect x="801.6" y="675.4" width="3" height="3" fill="#707070"/><rect x="808" y="669" width="3" height="3" fill="#707070"/><path d="M804,676l4.6,-5" stroke="#707070" stroke-width="1"/><path d="M819.4,678.4v-7q0,-2 2,-2h6" stroke="#707070" stroke-width="1"/><rect x="818.2" y="669" width="2.6" height="2.6" fill="#707070"/><path d="M852.4,679q2,-0.4 3,-4t2.4,-4q1.6,0 2.6,4t3,4" stroke="#8a8a8a" stroke-width="0.9"/><rect x="856" y="669.4" width="3.6" height="3" stroke="#8a8a8a" stroke-width="0.9"/><path d="M852,670.8h4M859.6,670.8h4" stroke="#8a8a8a" stroke-width="0.9"/><path d="M870,679q3,-0.6 4.6,-4.4t4.4,-3.8" stroke="#8a8a8a" stroke-width="0.9"/><rect x="877.6" y="669.4" width="3.4" height="3" stroke="#8a8a8a" stroke-width="0.9"/><path d="M873,670.8h4.6" stroke="#8a8a8a" stroke-width="0.9"/><path d="M889.6,671q3,0.4 4,4t3.6,4" stroke="#8a8a8a" stroke-width="0.9"/><rect x="885.6" y="669.4" width="3.4" height="3" stroke="#8a8a8a" stroke-width="0.9"/><path d="M889,670.8h4" stroke="#8a8a8a" stroke-width="0.9"/></g></svg>
<div style="left:600px;top:508px;width:178px;height:159.60000000000002px;background:#f1f1f1;border:1px solid #9a9a9a;box-shadow:1px 1px 2px rgba(0,0,0,.45);"></div>
<div style="left:619.4px;top:510px;width:1px;height:155.6px;background:#e0e0e0;"></div>
<div style="left:620.4px;top:510px;width:1px;height:155.6px;background:#fbfbfb;"></div>
<div style="left:621.6px;top:570.4px;width:154px;height:1px;background:#dcdcdc;"></div>
<div style="left:621.6px;top:571.4px;width:154px;height:1px;background:#fcfcfc;"></div>
<div style="left:621.6px;top:649.6px;width:154px;height:1px;background:#dcdcdc;"></div>
<div style="left:621.6px;top:650.6px;width:154px;height:1px;background:#fcfcfc;"></div>
<div style="left:602.2px;top:652.2px;width:173.6px;height:13.8px;background:#d3e5f8;border:1px solid #84acdd;"></div>
<div style="left:602.2px;top:539.1999999999999px;width:14.6px;height:14.4px;background:#cde3f7;border:1px solid #79a9dc;"></div>
<div style="left:602.2px;top:617.1999999999999px;width:14.6px;height:14.4px;background:#cde3f7;border:1px solid #79a9dc;"></div>
<div class="t" style="left:623.60px;top:511.81px;color:#1a1a1a;font-size:8.05px;letter-spacing:-0.099px;">Auto-Select Graph Type</div>
<div class="t" style="left:623.60px;top:526.61px;color:#1a1a1a;font-size:8.05px;letter-spacing:-0.169px;">Edit Value Graph</div>
<div class="t" style="left:623.60px;top:541.11px;color:#1a1a1a;font-size:8.05px;letter-spacing:-0.250px;">Edit Speed Graph</div>
<div class="t" style="left:623.60px;top:555.61px;color:#1a1a1a;font-size:8.05px;letter-spacing:-0.256px;">Show Reference Graph</div>
<div class="t" style="left:623.60px;top:575.11px;color:#1a1a1a;font-size:8.05px;letter-spacing:-0.033px;">Show Audio Waveforms</div>
<div class="t" style="left:623.60px;top:589.91px;color:#1a1a1a;font-size:8.05px;letter-spacing:-0.095px;">Show Layer In/Out Points</div>
<div class="t" style="left:623.60px;top:604.41px;color:#1a1a1a;font-size:8.05px;letter-spacing:-0.212px;">Show Layer Markers</div>
<div class="t" style="left:623.60px;top:619.01px;color:#1a1a1a;font-size:8.05px;letter-spacing:-0.055px;">Show Graph Tool Tips</div>
<div class="t" style="left:623.60px;top:633.61px;color:#1a1a1a;font-size:8.05px;letter-spacing:-0.226px;">Show Expression Editor</div>
<div class="t" style="left:623.60px;top:653.31px;color:#1a1a1a;font-size:8.05px;letter-spacing:-0.168px;">Allow Keyframes Between Frames</div>
<svg style="left:0;top:0" width="1280" height="720" viewBox="0 0 1280 720" fill="none"><path d="M606.4,546.4l2.2,2.6l4,-5.6" stroke="#111" stroke-width="1.5"/><path d="M606.4,624.4l2.2,2.6l4,-5.6" stroke="#111" stroke-width="1.5"/><path d="M614.2,629.4v10.6l2.4,-2.2l1.8,4l1.6,-0.7l-1.8,-3.9l3.2,-0.2z" fill="#fdfdfd" stroke="#222" stroke-width="0.8" stroke-linejoin="round"/></svg>
</div></body></html>
